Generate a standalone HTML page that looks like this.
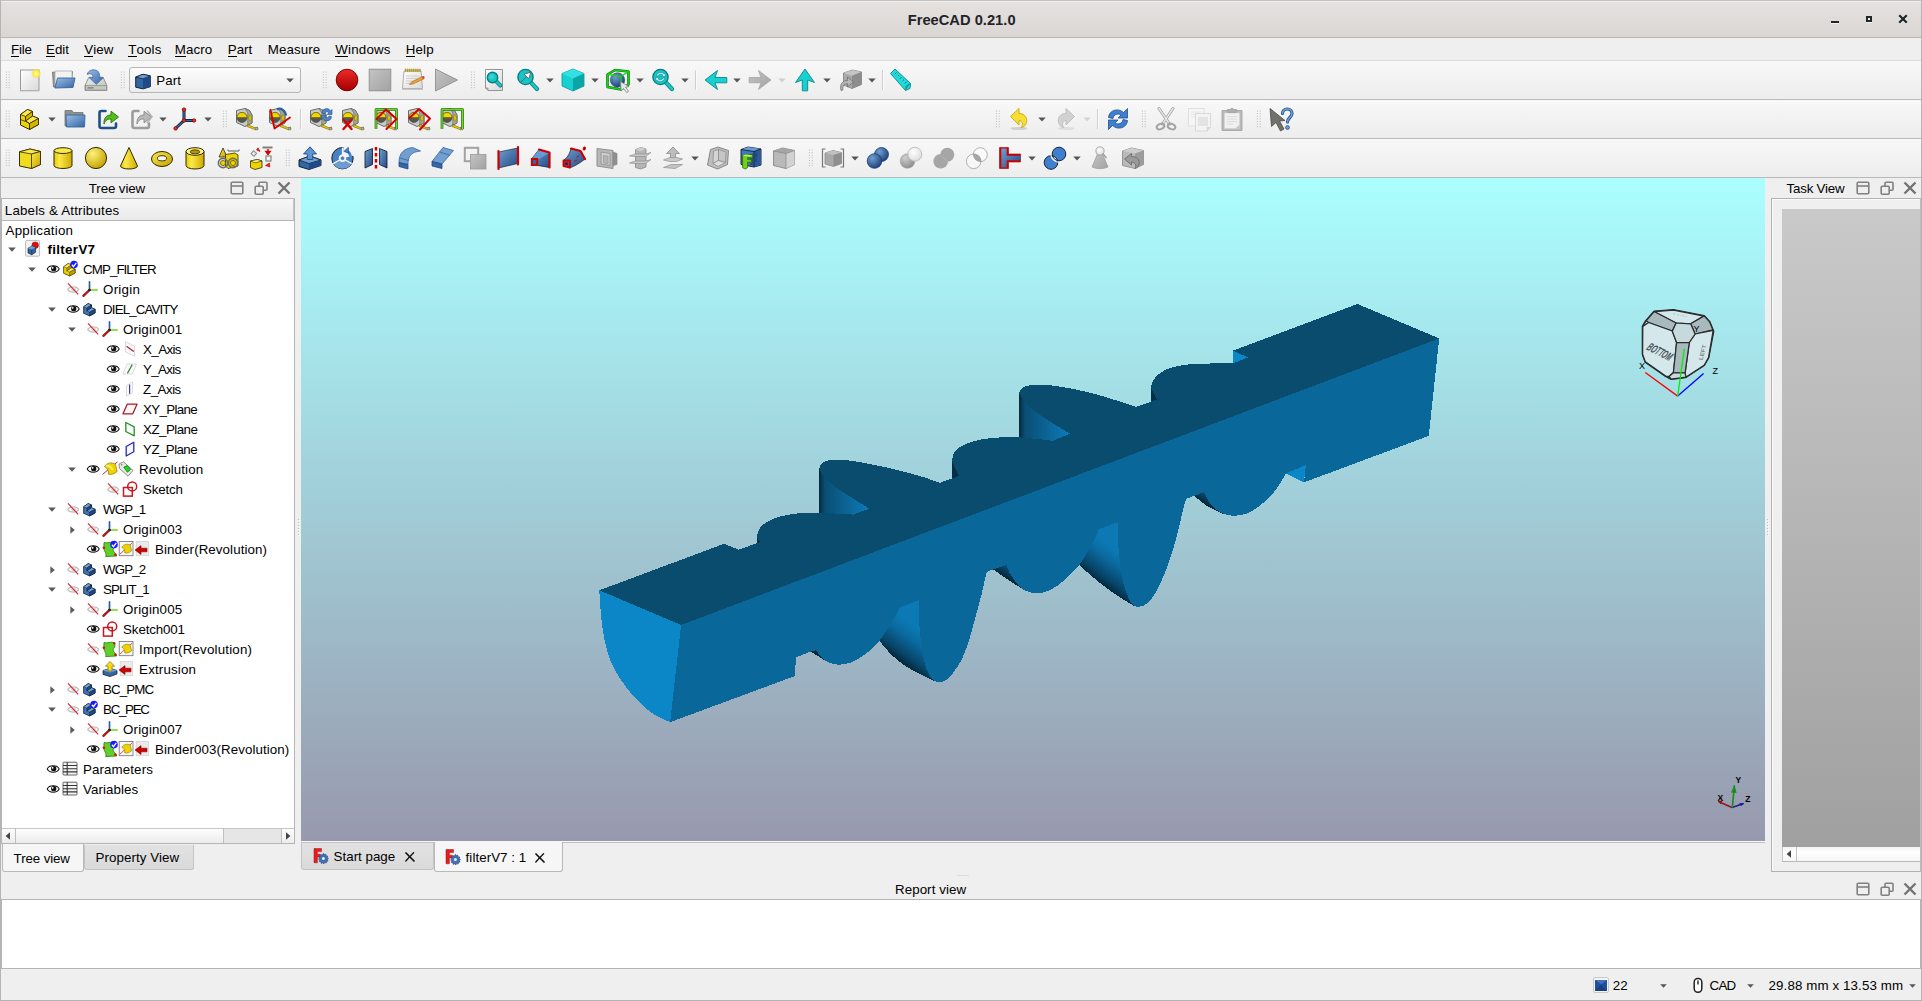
<!DOCTYPE html><html><head><meta charset="utf-8"><title>FreeCAD 0.21.0</title><style>
html,body{margin:0;padding:0;}
body{width:1922px;height:1001px;overflow:hidden;background:#efefef;font-family:"Liberation Sans",sans-serif;font-size:13.33px;color:#000;position:relative;}
div{box-sizing:border-box;}
svg{position:absolute;overflow:visible;}
.tb{position:absolute;left:1px;width:1920px;height:39px;background:linear-gradient(#f8f8f8,#ededed);border-bottom:1px solid #b9b9b9;}
u{text-decoration:none;border-bottom:1px solid #000;display:inline-block;line-height:13.8px;}
</style></head><body>
<svg width="0" height="0" style="left:0;top:0"><defs><linearGradient id="gY" x1="0" y1="0" x2="1" y2="1"><stop offset="0" stop-color="#fce94f"/><stop offset="1" stop-color="#c4a000"/></linearGradient><linearGradient id="gYv" x1="0" y1="0" x2="1" y2="0"><stop offset="0" stop-color="#e6c800"/><stop offset="0.3" stop-color="#fbe94a"/><stop offset="1" stop-color="#cfa900"/></linearGradient><linearGradient id="gB" x1="0" y1="0" x2="1" y2="1"><stop offset="0" stop-color="#729fcf"/><stop offset="1" stop-color="#204a87"/></linearGradient><linearGradient id="gBl" x1="0" y1="0" x2="1" y2="1"><stop offset="0" stop-color="#9dc0e6"/><stop offset="1" stop-color="#3465a4"/></linearGradient><linearGradient id="gT" x1="0" y1="0" x2="1" y2="1"><stop offset="0" stop-color="#34e0e2"/><stop offset="1" stop-color="#06989a"/></linearGradient><linearGradient id="gG" x1="0" y1="0" x2="1" y2="1"><stop offset="0" stop-color="#c4c4c4"/><stop offset="1" stop-color="#a2a2a2"/></linearGradient><linearGradient id="gGl" x1="0" y1="0" x2="1" y2="1"><stop offset="0" stop-color="#eeeeec"/><stop offset="1" stop-color="#babdb6"/></linearGradient><linearGradient id="gR" x1="0" y1="0" x2="0" y2="1"><stop offset="0" stop-color="#ef2929"/><stop offset="1" stop-color="#a40000"/></linearGradient><linearGradient id="gP" x1="0" y1="0" x2="1" y2="1"><stop offset="0" stop-color="#ffffff"/><stop offset="1" stop-color="#d9d9d9"/></linearGradient><linearGradient id="gSb" x1="0" y1="0" x2="0" y2="1"><stop offset="0" stop-color="#f9f9f9"/><stop offset="1" stop-color="#ffffff"/></linearGradient><radialGradient id="gSun" cx="0.5" cy="0.5" r="0.5"><stop offset="0" stop-color="#ffffc0"/><stop offset="0.5" stop-color="#fff04a"/><stop offset="1" stop-color="#f4e03a" stop-opacity="0.55"/></radialGradient><radialGradient id="gSphY" cx="0.35" cy="0.3" r="0.75"><stop offset="0" stop-color="#fdf27a"/><stop offset="1" stop-color="#c4a000"/></radialGradient><radialGradient id="gSphB" cx="0.35" cy="0.3" r="0.75"><stop offset="0" stop-color="#729fcf"/><stop offset="1" stop-color="#1b3f78"/></radialGradient><radialGradient id="gSphG" cx="0.35" cy="0.3" r="0.75"><stop offset="0" stop-color="#cfcfcf"/><stop offset="1" stop-color="#8a8a8a"/></radialGradient><radialGradient id="gSphW" cx="0.4" cy="0.35" r="0.75"><stop offset="0" stop-color="#ffffff"/><stop offset="1" stop-color="#d8d8d8"/></radialGradient></defs></svg>
<div style="position:absolute;left:0px;top:0px;width:1922px;height:1001px;border:1px solid #b4b4b4;border-top-color:#c2c2c2;pointer-events:none;z-index:50;"></div>
<div style="position:absolute;left:1px;top:1px;width:1920px;height:36px;background:linear-gradient(#e4e1de,#dad6d3);border-top:1px solid #f1efed;"></div>
<div style="position:absolute;left:1px;top:37px;width:1920px;height:1px;background:#bcb6af;"></div>
<div style="position:absolute;top:9.50px;line-height:20px;font-size:14.67px;letter-spacing:0.024px;color:#1f2428;white-space:pre;font-weight:bold;left:907.71px;">FreeCAD 0.21.0</div>
<svg style="left:1825px;top:10px" width="90" height="18" viewBox="1825 10 90 18"><rect x="1831" y="22" width="8" height="2" fill="#f4f2f0"/><rect x="1831" y="21" width="8" height="2" fill="#1e262b"/><rect x="1866" y="17" width="6" height="6" fill="#f4f2f0"/><rect x="1866" y="16" width="6" height="6" fill="#1e262b"/><rect x="1868" y="18" width="2" height="2" fill="#f4f2f0"/><path d="M1900 17 L1906 23 M1906 17 L1900 23" stroke="#f4f2f0" stroke-width="2.2" stroke-linecap="square"/><path d="M1900 16 L1906 22 M1906 16 L1900 22" stroke="#1e262b" stroke-width="2.2" stroke-linecap="square"/></svg>
<div style="position:absolute;left:1px;top:38px;width:1920px;height:22px;background:#efefef;"></div>
<div style="position:absolute;left:1px;top:60px;width:1920px;height:1px;background:#dcdcdc;"></div>
<div style="position:absolute;left:11.0px;top:39.6px;line-height:20px;letter-spacing:-0.195px;white-space:pre;"><u>F</u>ile</div>
<div style="position:absolute;left:46.0px;top:39.6px;line-height:20px;letter-spacing:0.008px;white-space:pre;"><u>E</u>dit</div>
<div style="position:absolute;left:84.3px;top:39.6px;line-height:20px;letter-spacing:0.087px;white-space:pre;"><u>V</u>iew</div>
<div style="position:absolute;left:128.3px;top:39.6px;line-height:20px;letter-spacing:0.116px;white-space:pre;"><u>T</u>ools</div>
<div style="position:absolute;left:174.7px;top:39.6px;line-height:20px;letter-spacing:0.113px;white-space:pre;"><u>M</u>acro</div>
<div style="position:absolute;left:227.7px;top:39.6px;line-height:20px;letter-spacing:0.038px;white-space:pre;"><u>P</u>art</div>
<div style="position:absolute;left:267.7px;top:39.6px;line-height:20px;letter-spacing:0.105px;white-space:pre;">Measure</div>
<div style="position:absolute;left:335.3px;top:39.6px;line-height:20px;letter-spacing:0.189px;white-space:pre;"><u>W</u>indows</div>
<div style="position:absolute;left:405.7px;top:39.6px;line-height:20px;letter-spacing:0.146px;white-space:pre;"><u>H</u>elp</div>
<div class="tb" style="top:61px"></div>
<div class="tb" style="top:100px"></div>
<div class="tb" style="top:139px"></div>
<svg style="left:5.0px;top:71.0px" width="6" height="18" viewBox="0 0 6 18"><rect x="0.9" y="0.6" width="1" height="1" fill="#b9b9b9"/><rect x="3.7" y="0.6" width="1" height="1" fill="#b9b9b9"/><rect x="0.9" y="3.2" width="1" height="1" fill="#b9b9b9"/><rect x="3.7" y="3.2" width="1" height="1" fill="#b9b9b9"/><rect x="0.9" y="5.8" width="1" height="1" fill="#b9b9b9"/><rect x="3.7" y="5.8" width="1" height="1" fill="#b9b9b9"/><rect x="0.9" y="8.4" width="1" height="1" fill="#b9b9b9"/><rect x="3.7" y="8.4" width="1" height="1" fill="#b9b9b9"/><rect x="0.9" y="11.0" width="1" height="1" fill="#b9b9b9"/><rect x="3.7" y="11.0" width="1" height="1" fill="#b9b9b9"/><rect x="0.9" y="13.6" width="1" height="1" fill="#b9b9b9"/><rect x="3.7" y="13.6" width="1" height="1" fill="#b9b9b9"/><rect x="0.9" y="16.2" width="1" height="1" fill="#b9b9b9"/><rect x="3.7" y="16.2" width="1" height="1" fill="#b9b9b9"/></svg>
<svg style="left:18.0px;top:68.0px" width="24" height="24" viewBox="0 0 24 24"><rect x="2.5" y="2" width="18.5" height="20.5" fill="url(#gP)" stroke="#9a9a9a" stroke-width="1"/><path d="M2 23 H21.5" stroke="#c8c8c8" stroke-width="1"/><circle cx="18.2" cy="5.6" r="4.6" fill="url(#gSun)"/></svg>
<svg style="left:51.0px;top:68.0px" width="24" height="24" viewBox="0 0 24 24"><path d="M1.5 4 L2.5 19 H20 L21.5 3.5 H10 L9 5 Z" fill="#9b9d98" stroke="#6e706b" stroke-width="0.8"/><path d="M4 3 H21 V16 H4 Z" fill="#f2f2f0" stroke="#a5a5a2" stroke-width="0.7"/><path d="M4 20 L6.5 10 H24 L22 19.5 Z" fill="url(#gBl)" stroke="#3465a4" stroke-width="0.9" stroke-linejoin="round"/></svg>
<svg style="left:84.0px;top:68.0px" width="24" height="24" viewBox="0 0 24 24"><path d="M1 17.5 L4.8 9.3 H19.1 L22.9 17.5 V22.4 H1 Z" fill="url(#gGl)" stroke="#888a85" stroke-width="0.9" stroke-linejoin="round"/><rect x="1.5" y="17.5" width="21" height="4.6" fill="#c4c6c0" stroke="#888a85" stroke-width="0.7"/><rect x="3.5" y="19.3" width="6" height="1.2" fill="#777"/><path d="M3.2 6.5 C4 2 10 0.5 13.5 3 C15.5 4.8 15.8 7 15.8 9.8 H19.3 L12.3 16.3 L5.3 9.8 H9 C9 7 8 4.5 3.2 6.5 Z" fill="url(#gBl)" stroke="#3465a4" stroke-width="0.7"/></svg>
<svg style="left:120.0px;top:71.0px" width="6" height="18" viewBox="0 0 6 18"><rect x="0.9" y="0.6" width="1" height="1" fill="#b9b9b9"/><rect x="3.7" y="0.6" width="1" height="1" fill="#b9b9b9"/><rect x="0.9" y="3.2" width="1" height="1" fill="#b9b9b9"/><rect x="3.7" y="3.2" width="1" height="1" fill="#b9b9b9"/><rect x="0.9" y="5.8" width="1" height="1" fill="#b9b9b9"/><rect x="3.7" y="5.8" width="1" height="1" fill="#b9b9b9"/><rect x="0.9" y="8.4" width="1" height="1" fill="#b9b9b9"/><rect x="3.7" y="8.4" width="1" height="1" fill="#b9b9b9"/><rect x="0.9" y="11.0" width="1" height="1" fill="#b9b9b9"/><rect x="3.7" y="11.0" width="1" height="1" fill="#b9b9b9"/><rect x="0.9" y="13.6" width="1" height="1" fill="#b9b9b9"/><rect x="3.7" y="13.6" width="1" height="1" fill="#b9b9b9"/><rect x="0.9" y="16.2" width="1" height="1" fill="#b9b9b9"/><rect x="3.7" y="16.2" width="1" height="1" fill="#b9b9b9"/></svg>
<div style="position:absolute;left:129px;top:67px;width:172px;height:26px;border:1px solid #b6b6b6;border-radius:3px;background:linear-gradient(#fdfdfd,#ededed);"></div>
<svg style="left:134px;top:72px" width="18" height="18" viewBox="0 0 16 16"><path d="M1.5 4.5 L8 2 L14.5 3.5 V13 L8 15 L1.5 13.5 Z" fill="#3465a4" stroke="#0b1521" stroke-width="0.8" stroke-linejoin="round"/><path d="M1.5 4.5 L8 2 L14.5 3.5 L8 6 Z" fill="#729fcf" stroke="#0b1521" stroke-width="0.6"/><path d="M8 6 L14.5 3.5 V13 L8 15 Z" fill="#204a87"/></svg>
<div style="position:absolute;top:70.50px;line-height:20px;font-size:13.33px;letter-spacing:0.102px;color:#000;white-space:pre;left:156.30px;">Part</div>
<svg style="left:285.5px;top:78.0px" width="8" height="5" viewBox="0 0 8 5"><path d="M0.3 0.5 H7.7 L4 4.6 Z" fill="#555"/></svg>
<svg style="left:322.0px;top:71.0px" width="6" height="18" viewBox="0 0 6 18"><rect x="0.9" y="0.6" width="1" height="1" fill="#b9b9b9"/><rect x="3.7" y="0.6" width="1" height="1" fill="#b9b9b9"/><rect x="0.9" y="3.2" width="1" height="1" fill="#b9b9b9"/><rect x="3.7" y="3.2" width="1" height="1" fill="#b9b9b9"/><rect x="0.9" y="5.8" width="1" height="1" fill="#b9b9b9"/><rect x="3.7" y="5.8" width="1" height="1" fill="#b9b9b9"/><rect x="0.9" y="8.4" width="1" height="1" fill="#b9b9b9"/><rect x="3.7" y="8.4" width="1" height="1" fill="#b9b9b9"/><rect x="0.9" y="11.0" width="1" height="1" fill="#b9b9b9"/><rect x="3.7" y="11.0" width="1" height="1" fill="#b9b9b9"/><rect x="0.9" y="13.6" width="1" height="1" fill="#b9b9b9"/><rect x="3.7" y="13.6" width="1" height="1" fill="#b9b9b9"/><rect x="0.9" y="16.2" width="1" height="1" fill="#b9b9b9"/><rect x="3.7" y="16.2" width="1" height="1" fill="#b9b9b9"/></svg>
<svg style="left:335.0px;top:68.0px" width="24" height="24" viewBox="0 0 24 24"><circle cx="12" cy="12" r="10.8" fill="url(#gR)" stroke="#6a0000" stroke-width="0.9"/></svg>
<svg style="left:368.0px;top:68.0px" width="24" height="24" viewBox="0 0 24 24"><rect x="1.2" y="1.2" width="21.6" height="21.6" fill="url(#gG)" stroke="#8c8c8c" stroke-width="0.9"/></svg>
<svg style="left:401.0px;top:68.0px" width="24" height="24" viewBox="0 0 24 24"><path d="M1.5 20.5 L3 3 H20 L21.5 20.5 Z" fill="url(#gP)" stroke="#9a9a9a" stroke-width="0.8"/><rect x="4.00" y="0.8" width="1.2" height="3" rx="0.6" fill="#c2ab1f" stroke="#8f7c10" stroke-width="0.3"/><rect x="6.05" y="0.8" width="1.2" height="3" rx="0.6" fill="#c2ab1f" stroke="#8f7c10" stroke-width="0.3"/><rect x="8.10" y="0.8" width="1.2" height="3" rx="0.6" fill="#c2ab1f" stroke="#8f7c10" stroke-width="0.3"/><rect x="10.15" y="0.8" width="1.2" height="3" rx="0.6" fill="#c2ab1f" stroke="#8f7c10" stroke-width="0.3"/><rect x="12.20" y="0.8" width="1.2" height="3" rx="0.6" fill="#c2ab1f" stroke="#8f7c10" stroke-width="0.3"/><rect x="14.25" y="0.8" width="1.2" height="3" rx="0.6" fill="#c2ab1f" stroke="#8f7c10" stroke-width="0.3"/><rect x="16.30" y="0.8" width="1.2" height="3" rx="0.6" fill="#c2ab1f" stroke="#8f7c10" stroke-width="0.3"/><rect x="18.35" y="0.8" width="1.2" height="3" rx="0.6" fill="#c2ab1f" stroke="#8f7c10" stroke-width="0.3"/><path d="M5 8 H18 M5 10.5 H16 M5 13 H17 M5 15.5 H12" stroke="#c6c6c6" stroke-width="0.8"/><path d="M1 21.2 H22" stroke="#bdbdbd" stroke-width="1.2"/><path d="M8.5 16.5 L10.5 14 L21 8.5 L23 10.8 L12 16 Z" fill="#e9a23b" stroke="#a86a14" stroke-width="0.6"/><circle cx="22.3" cy="9.4" r="1.3" fill="#e63b3b"/></svg>
<svg style="left:434.0px;top:68.0px" width="24" height="24" viewBox="0 0 24 24"><path d="M1.5 1 L23.5 12 L1.5 23 Z" fill="url(#gG)" stroke="#909090" stroke-width="0.9" stroke-linejoin="round"/></svg>
<svg style="left:470.0px;top:71.0px" width="6" height="18" viewBox="0 0 6 18"><rect x="0.9" y="0.6" width="1" height="1" fill="#b9b9b9"/><rect x="3.7" y="0.6" width="1" height="1" fill="#b9b9b9"/><rect x="0.9" y="3.2" width="1" height="1" fill="#b9b9b9"/><rect x="3.7" y="3.2" width="1" height="1" fill="#b9b9b9"/><rect x="0.9" y="5.8" width="1" height="1" fill="#b9b9b9"/><rect x="3.7" y="5.8" width="1" height="1" fill="#b9b9b9"/><rect x="0.9" y="8.4" width="1" height="1" fill="#b9b9b9"/><rect x="3.7" y="8.4" width="1" height="1" fill="#b9b9b9"/><rect x="0.9" y="11.0" width="1" height="1" fill="#b9b9b9"/><rect x="3.7" y="11.0" width="1" height="1" fill="#b9b9b9"/><rect x="0.9" y="13.6" width="1" height="1" fill="#b9b9b9"/><rect x="3.7" y="13.6" width="1" height="1" fill="#b9b9b9"/><rect x="0.9" y="16.2" width="1" height="1" fill="#b9b9b9"/><rect x="3.7" y="16.2" width="1" height="1" fill="#b9b9b9"/></svg>
<svg style="left:483.0px;top:68.0px" width="24" height="24" viewBox="0 0 24 24"><path d="M2.5 1.5 H19.5 V22.5 H5 L2.5 20 Z" fill="url(#gP)" stroke="#8a8a8a" stroke-width="0.9"/><path d="M2.5 20 H5 V22.5" fill="#bbb" stroke="#777" stroke-width="0.6"/><path d="M12.6 12.6 L17.2 17.4" stroke="#067e80" stroke-width="4.2" stroke-linecap="round"/><path d="M12.6 12.6 L17.2 17.4" stroke="#16c8ca" stroke-width="2.6" stroke-linecap="round"/><circle cx="9.5" cy="9.5" r="5.2" fill="#19c4c6" stroke="#067e80" stroke-width="1.4"/><circle cx="8.6" cy="8.6" r="2.6" fill="#3fdadc" opacity="0.7"/></svg>
<svg style="left:515.5px;top:68.0px" width="24" height="24" viewBox="0 0 24 24"><path d="M14.1 13.6 L21 21" stroke="#067e80" stroke-width="4.2" stroke-linecap="round"/><path d="M14.1 13.6 L21 21" stroke="#16c8ca" stroke-width="2.6" stroke-linecap="round"/><circle cx="9.5" cy="9" r="7.6" fill="#19c4c6" stroke="#067e80" stroke-width="1.4"/><path d="M5 14 L10.5 8.5 L8.2 6.2 L14.8 4.2 L12.8 10.8 L10.5 8.5" fill="#fff" stroke="#555" stroke-width="0.8" stroke-linejoin="round"/></svg>
<svg style="left:546.0px;top:78.0px" width="8" height="5" viewBox="0 0 8 5"><path d="M0.3 0.5 H7.7 L4 4.6 Z" fill="#555"/></svg>
<svg style="left:561.0px;top:68.0px" width="24" height="24" viewBox="0 0 24 24"><path d="M12 1 L23 5.5 V18 L12 23 L1 18 V5.5 Z" fill="#16d0d2" stroke="#06989a" stroke-width="0.8" stroke-linejoin="round"/><path d="M12 1 L23 5.5 L12 10.5 L1 5.5 Z" fill="#34e0e2"/><path d="M12 10.5 L23 5.5 V18 L12 23 Z" fill="#0aa5a7"/></svg>
<svg style="left:591.0px;top:78.0px" width="8" height="5" viewBox="0 0 8 5"><path d="M0.3 0.5 H7.7 L4 4.6 Z" fill="#555"/></svg>
<svg style="left:606.0px;top:68.0px" width="24" height="24" viewBox="0 0 24 24"><path d="M1.5 6.5 L9 2 L22.5 3.5 V16.5 L15 21.5 L1.5 19 Z" fill="none" stroke="#0a7a0a" stroke-width="2.6" stroke-linejoin="round"/><circle cx="11.5" cy="12" r="7.2" fill="url(#gSphB)" stroke="#1b3f78" stroke-width="0.6"/><path d="M1.5 6.5 L9 2 L22.5 3.5 V16.5 L15 21.5 L1.5 19 Z M1.5 6.5 L15 8.5 V21.5 M15 8.5 L22.5 3.5" fill="none" stroke="#18d218" stroke-width="1.3" stroke-linejoin="round"/><path d="M14.5 13.5 L15.2 22.8 L17.6 20.6 L20.8 24.6 L22.6 23.3 L19.6 19.2 L22.8 18.6 Z" fill="#e8e8e8" stroke="#777" stroke-width="0.7" stroke-linejoin="round"/></svg>
<svg style="left:636.0px;top:78.0px" width="8" height="5" viewBox="0 0 8 5"><path d="M0.3 0.5 H7.7 L4 4.6 Z" fill="#555"/></svg>
<svg style="left:650.5px;top:68.0px" width="24" height="24" viewBox="0 0 24 24"><path d="M14.1 13.6 L21 21" stroke="#067e80" stroke-width="4.2" stroke-linecap="round"/><path d="M14.1 13.6 L21 21" stroke="#16c8ca" stroke-width="2.6" stroke-linecap="round"/><circle cx="9.5" cy="9" r="7.6" fill="#19c4c6" stroke="#067e80" stroke-width="1.4"/><path d="M5.2 8 A4.6 4.6 0 0 1 13.2 6 L14.3 4.6 V8.6 H10.6 L12 7.2 A3 3 0 0 0 6.9 8 Z M13.8 10 A4.6 4.6 0 0 1 5.8 12 L4.7 13.4 V9.4 H8.4 L7 10.8 A3 3 0 0 0 12.1 10 Z" fill="#c8f4f5" stroke="#067e80" stroke-width="0.5"/></svg>
<svg style="left:681.0px;top:78.0px" width="8" height="5" viewBox="0 0 8 5"><path d="M0.3 0.5 H7.7 L4 4.6 Z" fill="#555"/></svg>
<div style="position:absolute;left:694.6px;top:70px;width:1px;height:20px;background:#cfcfcf"></div><div style="position:absolute;left:695.6px;top:70px;width:1px;height:20px;background:#fbfbfb"></div>
<svg style="left:703.5px;top:68.0px" width="24" height="24" viewBox="0 0 24 24"><path d="M1 12 L13.5 2.5 L11 9.5 H22.8 V14.8 H11 L13.5 21.5 Z" fill="#16d0d2" stroke="#06898b" stroke-width="0.9" stroke-linejoin="round"/></svg>
<svg style="left:733.0px;top:78.0px" width="8" height="5" viewBox="0 0 8 5"><path d="M0.3 0.5 H7.7 L4 4.6 Z" fill="#555"/></svg>
<svg style="left:748.0px;top:68.0px" width="24" height="24" viewBox="0 0 24 24"><path d="M23 12 L10.5 2.5 L13 9.5 H1.2 V14.8 H13 L10.5 21.5 Z" fill="url(#gG)" stroke="#a5a5a5" stroke-width="0.8" stroke-linejoin="round"/></svg>
<svg style="left:778.0px;top:78.0px" width="8" height="5" viewBox="0 0 8 5"><path d="M0.3 0.5 H7.7 L4 4.6 Z" fill="#d0d0d0"/></svg>
<svg style="left:793.0px;top:68.0px" width="24" height="24" viewBox="0 0 24 24"><path d="M12 1 L2.5 14.5 L9.3 12 V22.8 H14.7 V12 L21.5 14.5 Z" fill="#16d0d2" stroke="#06898b" stroke-width="0.9" stroke-linejoin="round"/></svg>
<svg style="left:823.0px;top:78.0px" width="8" height="5" viewBox="0 0 8 5"><path d="M0.3 0.5 H7.7 L4 4.6 Z" fill="#555"/></svg>
<svg style="left:838.5px;top:68.0px" width="24" height="24" viewBox="0 0 24 24"><path d="M13.5 2 L22.5 4 V16.5 L13 20.5 L4.5 17 V5 Z" fill="#a9a9a9" stroke="#7e7e7e" stroke-width="0.8" stroke-linejoin="round"/><path d="M13.5 2 L22.5 4 L13 7.8 L4.5 5 Z" fill="#c4c4c4"/><path d="M13 7.8 L22.5 4 V16.5 L13 20.5 Z" fill="#8d8d8d"/><path d="M2 22.5 C0.5 15.5 4 12.5 8.5 12.5 V9 L14.5 14 L8.5 19 V15.8 C5.5 15.5 3.5 17.5 3.8 22 Z" fill="#b5b5b5" stroke="#6f6f6f" stroke-width="0.8" stroke-linejoin="round"/></svg>
<svg style="left:868.0px;top:78.0px" width="8" height="5" viewBox="0 0 8 5"><path d="M0.3 0.5 H7.7 L4 4.6 Z" fill="#555"/></svg>
<div style="position:absolute;left:881.5px;top:70px;width:1px;height:20px;background:#cfcfcf"></div><div style="position:absolute;left:882.5px;top:70px;width:1px;height:20px;background:#fbfbfb"></div>
<svg style="left:889.0px;top:68.0px" width="24" height="24" viewBox="0 0 24 24"><path d="M1.5 5.5 L6 1 L21.5 15.5 L21 20.5 L16.5 22.5 Z" fill="#21dadc" stroke="#06898b" stroke-width="0.9" stroke-linejoin="round"/><path d="M16.5 22.5 L17 18 L21.5 15.5" fill="#0aa5a7" stroke="#06898b" stroke-width="0.6"/><path d="M7.5 4.5 L5.8 6.2 M10 6.8 L8.8 8 M12.5 9.1 L10.8 10.8 M15 11.5 L13.8 12.7 M17.5 13.8 L15.8 15.5" stroke="#046567" stroke-width="0.9"/></svg>
<svg style="left:5.0px;top:110.0px" width="6" height="18" viewBox="0 0 6 18"><rect x="0.9" y="0.6" width="1" height="1" fill="#b9b9b9"/><rect x="3.7" y="0.6" width="1" height="1" fill="#b9b9b9"/><rect x="0.9" y="3.2" width="1" height="1" fill="#b9b9b9"/><rect x="3.7" y="3.2" width="1" height="1" fill="#b9b9b9"/><rect x="0.9" y="5.8" width="1" height="1" fill="#b9b9b9"/><rect x="3.7" y="5.8" width="1" height="1" fill="#b9b9b9"/><rect x="0.9" y="8.4" width="1" height="1" fill="#b9b9b9"/><rect x="3.7" y="8.4" width="1" height="1" fill="#b9b9b9"/><rect x="0.9" y="11.0" width="1" height="1" fill="#b9b9b9"/><rect x="3.7" y="11.0" width="1" height="1" fill="#b9b9b9"/><rect x="0.9" y="13.6" width="1" height="1" fill="#b9b9b9"/><rect x="3.7" y="13.6" width="1" height="1" fill="#b9b9b9"/><rect x="0.9" y="16.2" width="1" height="1" fill="#b9b9b9"/><rect x="3.7" y="16.2" width="1" height="1" fill="#b9b9b9"/></svg>
<svg style="left:18.0px;top:105.5px" width="24" height="24" viewBox="0 0 24 24"><path d="M2.5 8.5 L9.5 3.5 L14.5 5.5 V10 L20.5 12.5 V18.5 L11.5 23.5 L2.5 19 Z" fill="#edd400" stroke="#302b00" stroke-width="1" stroke-linejoin="round"/><path d="M2.5 8.5 L9.5 3.5 L14.5 5.5 L7.5 10.5 Z M7.5 15 L14.5 10 L20.5 12.5 L11.5 17.5 Z" fill="#fce94f" stroke="#302b00" stroke-width="0.8" stroke-linejoin="round"/><path d="M11.5 17.5 L20.5 12.5 V18.5 L11.5 23.5 Z M7.5 10.5 L14.5 5.5 V10 L7.5 15 Z" fill="#d4b600" stroke="#302b00" stroke-width="0.8" stroke-linejoin="round"/><path d="M2.5 13.5 L7.5 15.5 M7.5 10.5 V15 L11.5 17.5 V23.5" fill="none" stroke="#302b00" stroke-width="0.8"/></svg>
<svg style="left:48.0px;top:117.0px" width="8" height="5" viewBox="0 0 8 5"><path d="M0.3 0.5 H7.7 L4 4.6 Z" fill="#555"/></svg>
<svg style="left:63.0px;top:105.5px" width="24" height="24" viewBox="0 0 24 24"><path d="M2 4.5 H9 L10.5 6.5 H20 V20 H2 Z" fill="#8f918c" stroke="#70726d" stroke-width="0.8"/><path d="M3 9 H22 L21.5 21 H3.5 Z" fill="url(#gBl)" stroke="#3465a4" stroke-width="0.9" stroke-linejoin="round"/></svg>
<svg style="left:95.5px;top:106.5px" width="24" height="24" viewBox="0 0 24 24"><path d="M9.5 4 H5.5 Q3.5 4 3.5 6 V19 Q3.5 21 5.5 21 H18 Q20 21 20 19 V16.5" fill="none" stroke="#1f4f8a" stroke-width="2.6" stroke-linecap="round"/><path d="M8 17 C7.5 10.5 11 8 15 8 V4.2 L22.5 10 L15 15.8 V12 C12 11.8 9.5 13 8 17 Z" fill="#4fbf1c" stroke="#2d6f08" stroke-width="0.9" stroke-linejoin="round"/></svg>
<svg style="left:129.0px;top:106.5px" width="24" height="24" viewBox="0 0 24 24"><path d="M9.5 4 H5.5 Q3.5 4 3.5 6 V19 Q3.5 21 5.5 21 H18 Q20 21 20 19 V16.5" fill="none" stroke="#9c9c9c" stroke-width="2.6" stroke-linecap="round"/><path d="M8 17 C7.5 10.5 11 8 15 8 V4.2 L22.5 10 L15 15.8 V12 C12 11.8 9.5 13 8 17 Z" fill="#b9b9b9" stroke="#8a8a8a" stroke-width="0.9" stroke-linejoin="round"/><path d="M18 3.5 L23 9.8 L18 16" fill="none" stroke="#b5b5b5" stroke-width="1.6"/></svg>
<svg style="left:159.0px;top:117.0px" width="8" height="5" viewBox="0 0 8 5"><path d="M0.3 0.5 H7.7 L4 4.6 Z" fill="#555"/></svg>
<svg style="left:172.2px;top:107.0px" width="24" height="24" viewBox="0 0 24 24"><path d="M12 13.5 V2.5 M12 13.5 L22 13.5 M12 13.5 L3.5 21.5" stroke="#0b1521" stroke-width="3" stroke-linecap="round"/><path d="M12 13.5 V2.5 M12 13.5 L22 13.5 M12 13.5 L3.5 21.5" stroke="#3465a4" stroke-width="1.6" stroke-linecap="round"/><circle cx="12" cy="2.6" r="1.8" fill="#ef2929" stroke="#6a0000" stroke-width="0.6"/><circle cx="22" cy="13.5" r="1.8" fill="#ef2929" stroke="#6a0000" stroke-width="0.6"/><circle cx="3.6" cy="21.4" r="1.8" fill="#ef2929" stroke="#6a0000" stroke-width="0.6"/><circle cx="12" cy="13.5" r="1.8" fill="#ef2929" stroke="#6a0000" stroke-width="0.6"/></svg>
<svg style="left:204.0px;top:117.0px" width="8" height="5" viewBox="0 0 8 5"><path d="M0.3 0.5 H7.7 L4 4.6 Z" fill="#555"/></svg>
<svg style="left:222.0px;top:110.0px" width="6" height="18" viewBox="0 0 6 18"><rect x="0.9" y="0.6" width="1" height="1" fill="#b9b9b9"/><rect x="3.7" y="0.6" width="1" height="1" fill="#b9b9b9"/><rect x="0.9" y="3.2" width="1" height="1" fill="#b9b9b9"/><rect x="3.7" y="3.2" width="1" height="1" fill="#b9b9b9"/><rect x="0.9" y="5.8" width="1" height="1" fill="#b9b9b9"/><rect x="3.7" y="5.8" width="1" height="1" fill="#b9b9b9"/><rect x="0.9" y="8.4" width="1" height="1" fill="#b9b9b9"/><rect x="3.7" y="8.4" width="1" height="1" fill="#b9b9b9"/><rect x="0.9" y="11.0" width="1" height="1" fill="#b9b9b9"/><rect x="3.7" y="11.0" width="1" height="1" fill="#b9b9b9"/><rect x="0.9" y="13.6" width="1" height="1" fill="#b9b9b9"/><rect x="3.7" y="13.6" width="1" height="1" fill="#b9b9b9"/><rect x="0.9" y="16.2" width="1" height="1" fill="#b9b9b9"/><rect x="3.7" y="16.2" width="1" height="1" fill="#b9b9b9"/></svg>
<svg style="left:235.0px;top:107.0px" width="24" height="24" viewBox="0 0 24 24"><path d="M1.5 3.5 L10 1.5 L14.5 3.5 L17 8 V16 L10 19.5 L1.5 15.5 Z" fill="#c9ccc6" stroke="#5f615d" stroke-width="0.9" stroke-linejoin="round"/><path d="M10 1.5 L14.5 3.5 L17 8 V16 L12.8 18 V6 Z" fill="#a4a7a1" stroke="#5f615d" stroke-width="0.6"/><circle cx="7" cy="10.5" r="5" fill="#55574f" stroke="#3a3b37" stroke-width="0.6"/><path d="M2 10.5 A5 5 0 0 1 12 10.5 Z" fill="#f1d600" stroke="#6e6000" stroke-width="0.6"/><ellipse cx="15" cy="11" rx="1.3" ry="3.2" fill="#e8cf00" stroke="#6e6000" stroke-width="0.5"/><path d="M12.5 17.5 L20 20.8 L22.5 20 L22.8 22.2 L20.5 22.8 L12 19.5 Z" fill="#e8cf00" stroke="#6e6000" stroke-width="0.6" stroke-linejoin="round"/><path d="M20.5 20.3 L23 21.3 L22.6 23 L20.3 22.6 Z" fill="#b8bab4" stroke="#5f615d" stroke-width="0.5"/></svg>
<svg style="left:268.0px;top:107.0px" width="24" height="24" viewBox="0 0 24 24"><path d="M1.5 3.5 L10 1.5 L14.5 3.5 L17 8 V16 L10 19.5 L1.5 15.5 Z" fill="#c9ccc6" stroke="#5f615d" stroke-width="0.9" stroke-linejoin="round"/><path d="M10 1.5 L14.5 3.5 L17 8 V16 L12.8 18 V6 Z" fill="#a4a7a1" stroke="#5f615d" stroke-width="0.6"/><circle cx="7" cy="10.5" r="5" fill="#55574f" stroke="#3a3b37" stroke-width="0.6"/><path d="M2 10.5 A5 5 0 0 1 12 10.5 Z" fill="#f1d600" stroke="#6e6000" stroke-width="0.6"/><ellipse cx="15" cy="11" rx="1.3" ry="3.2" fill="#e8cf00" stroke="#6e6000" stroke-width="0.5"/><path d="M12.5 17.5 L20 20.8 L22.5 20 L22.8 22.2 L20.5 22.8 L12 19.5 Z" fill="#e8cf00" stroke="#6e6000" stroke-width="0.6" stroke-linejoin="round"/><path d="M20.5 20.3 L23 21.3 L22.6 23 L20.3 22.6 Z" fill="#b8bab4" stroke="#5f615d" stroke-width="0.5"/><path d="M9 2.2 C13 0.5 17.5 3.5 18 8.5" fill="none" stroke="#2a5fa5" stroke-width="2.2"/><path d="M2.5 3 L6.5 21.5 L22 10.5" fill="none" stroke="#d40000" stroke-width="1.8" stroke-linejoin="round" stroke-linecap="round"/></svg>
<div style="position:absolute;left:299.5px;top:109px;width:1px;height:20px;background:#cfcfcf"></div><div style="position:absolute;left:300.5px;top:109px;width:1px;height:20px;background:#fbfbfb"></div>
<svg style="left:308.5px;top:107.0px" width="24" height="24" viewBox="0 0 24 24"><path d="M1.5 3.5 L10 1.5 L14.5 3.5 L17 8 V16 L10 19.5 L1.5 15.5 Z" fill="#c9ccc6" stroke="#5f615d" stroke-width="0.9" stroke-linejoin="round"/><path d="M10 1.5 L14.5 3.5 L17 8 V16 L12.8 18 V6 Z" fill="#a4a7a1" stroke="#5f615d" stroke-width="0.6"/><circle cx="7" cy="10.5" r="5" fill="#55574f" stroke="#3a3b37" stroke-width="0.6"/><path d="M2 10.5 A5 5 0 0 1 12 10.5 Z" fill="#f1d600" stroke="#6e6000" stroke-width="0.6"/><ellipse cx="15" cy="11" rx="1.3" ry="3.2" fill="#e8cf00" stroke="#6e6000" stroke-width="0.5"/><path d="M12.5 17.5 L20 20.8 L22.5 20 L22.8 22.2 L20.5 22.8 L12 19.5 Z" fill="#e8cf00" stroke="#6e6000" stroke-width="0.6" stroke-linejoin="round"/><path d="M20.5 20.3 L23 21.3 L22.6 23 L20.3 22.6 Z" fill="#b8bab4" stroke="#5f615d" stroke-width="0.5"/><path d="M13 6 A4.5 4.5 0 0 1 21.5 4 L23 2.5 V7.5 H18.2 L19.8 5.8 A2.4 2.4 0 0 0 15.5 6.8 Z M22.5 9.5 A4.5 4.5 0 0 1 14 11.5 L12.5 13 V8.2 H17.3 L15.7 9.8 A2.4 2.4 0 0 0 20 9 Z" fill="#4a86cf" stroke="#1f4f8a" stroke-width="0.6"/></svg>
<svg style="left:341.0px;top:107.0px" width="24" height="24" viewBox="0 0 24 24"><path d="M1.5 3.5 L10 1.5 L14.5 3.5 L17 8 V16 L10 19.5 L1.5 15.5 Z" fill="#c9ccc6" stroke="#5f615d" stroke-width="0.9" stroke-linejoin="round"/><path d="M10 1.5 L14.5 3.5 L17 8 V16 L12.8 18 V6 Z" fill="#a4a7a1" stroke="#5f615d" stroke-width="0.6"/><circle cx="7" cy="10.5" r="5" fill="#55574f" stroke="#3a3b37" stroke-width="0.6"/><path d="M2 10.5 A5 5 0 0 1 12 10.5 Z" fill="#f1d600" stroke="#6e6000" stroke-width="0.6"/><ellipse cx="15" cy="11" rx="1.3" ry="3.2" fill="#e8cf00" stroke="#6e6000" stroke-width="0.5"/><path d="M12.5 17.5 L20 20.8 L22.5 20 L22.8 22.2 L20.5 22.8 L12 19.5 Z" fill="#e8cf00" stroke="#6e6000" stroke-width="0.6" stroke-linejoin="round"/><path d="M20.5 20.3 L23 21.3 L22.6 23 L20.3 22.6 Z" fill="#b8bab4" stroke="#5f615d" stroke-width="0.5"/><path d="M2.5 13 L10.5 22 M10.5 13 L2.5 22" stroke="#d40000" stroke-width="2.4" stroke-linecap="round"/></svg>
<svg style="left:374.0px;top:107.0px" width="24" height="24" viewBox="0 0 24 24"><path d="M1.5 3.5 L10 1.5 L14.5 3.5 L17 8 V16 L10 19.5 L1.5 15.5 Z" fill="#c9ccc6" stroke="#5f615d" stroke-width="0.9" stroke-linejoin="round"/><path d="M10 1.5 L14.5 3.5 L17 8 V16 L12.8 18 V6 Z" fill="#a4a7a1" stroke="#5f615d" stroke-width="0.6"/><circle cx="7" cy="10.5" r="5" fill="#55574f" stroke="#3a3b37" stroke-width="0.6"/><path d="M2 10.5 A5 5 0 0 1 12 10.5 Z" fill="#f1d600" stroke="#6e6000" stroke-width="0.6"/><ellipse cx="15" cy="11" rx="1.3" ry="3.2" fill="#e8cf00" stroke="#6e6000" stroke-width="0.5"/><path d="M12.5 17.5 L20 20.8 L22.5 20 L22.8 22.2 L20.5 22.8 L12 19.5 Z" fill="#e8cf00" stroke="#6e6000" stroke-width="0.6" stroke-linejoin="round"/><path d="M20.5 20.3 L23 21.3 L22.6 23 L20.3 22.6 Z" fill="#b8bab4" stroke="#5f615d" stroke-width="0.5"/><path d="M2 22 V2.5 H22.5 V22" fill="none" stroke="#165a06" stroke-width="2.6" stroke-linejoin="round"/><path d="M2 22 V2.5 H22.5 V22" fill="none" stroke="#6fd626" stroke-width="1.5" stroke-linejoin="round"/><path d="M2.5 12 L12 2.5 L22.5 12 L12.5 22" fill="none" stroke="#d40000" stroke-width="2" stroke-linejoin="round" stroke-linecap="round"/></svg>
<svg style="left:407.0px;top:107.0px" width="24" height="24" viewBox="0 0 24 24"><path d="M1.5 3.5 L10 1.5 L14.5 3.5 L17 8 V16 L10 19.5 L1.5 15.5 Z" fill="#c9ccc6" stroke="#5f615d" stroke-width="0.9" stroke-linejoin="round"/><path d="M10 1.5 L14.5 3.5 L17 8 V16 L12.8 18 V6 Z" fill="#a4a7a1" stroke="#5f615d" stroke-width="0.6"/><circle cx="7" cy="10.5" r="5" fill="#55574f" stroke="#3a3b37" stroke-width="0.6"/><path d="M2 10.5 A5 5 0 0 1 12 10.5 Z" fill="#f1d600" stroke="#6e6000" stroke-width="0.6"/><ellipse cx="15" cy="11" rx="1.3" ry="3.2" fill="#e8cf00" stroke="#6e6000" stroke-width="0.5"/><path d="M12.5 17.5 L20 20.8 L22.5 20 L22.8 22.2 L20.5 22.8 L12 19.5 Z" fill="#e8cf00" stroke="#6e6000" stroke-width="0.6" stroke-linejoin="round"/><path d="M20.5 20.3 L23 21.3 L22.6 23 L20.3 22.6 Z" fill="#b8bab4" stroke="#5f615d" stroke-width="0.5"/><path d="M2.5 11 L12 2 L23 11.5 L13 22.5" fill="none" stroke="#d40000" stroke-width="2" stroke-linejoin="round" stroke-linecap="round"/></svg>
<svg style="left:440.0px;top:107.0px" width="24" height="24" viewBox="0 0 24 24"><path d="M1.5 3.5 L10 1.5 L14.5 3.5 L17 8 V16 L10 19.5 L1.5 15.5 Z" fill="#c9ccc6" stroke="#5f615d" stroke-width="0.9" stroke-linejoin="round"/><path d="M10 1.5 L14.5 3.5 L17 8 V16 L12.8 18 V6 Z" fill="#a4a7a1" stroke="#5f615d" stroke-width="0.6"/><circle cx="7" cy="10.5" r="5" fill="#55574f" stroke="#3a3b37" stroke-width="0.6"/><path d="M2 10.5 A5 5 0 0 1 12 10.5 Z" fill="#f1d600" stroke="#6e6000" stroke-width="0.6"/><ellipse cx="15" cy="11" rx="1.3" ry="3.2" fill="#e8cf00" stroke="#6e6000" stroke-width="0.5"/><path d="M12.5 17.5 L20 20.8 L22.5 20 L22.8 22.2 L20.5 22.8 L12 19.5 Z" fill="#e8cf00" stroke="#6e6000" stroke-width="0.6" stroke-linejoin="round"/><path d="M20.5 20.3 L23 21.3 L22.6 23 L20.3 22.6 Z" fill="#b8bab4" stroke="#5f615d" stroke-width="0.5"/><path d="M2 22 V2.5 H22.5 V22" fill="none" stroke="#165a06" stroke-width="2.6" stroke-linejoin="round"/><path d="M2 22 V2.5 H22.5 V22" fill="none" stroke="#6fd626" stroke-width="1.5" stroke-linejoin="round"/></svg>
<svg style="left:995.0px;top:110.0px" width="6" height="18" viewBox="0 0 6 18"><rect x="0.9" y="0.6" width="1" height="1" fill="#b9b9b9"/><rect x="3.7" y="0.6" width="1" height="1" fill="#b9b9b9"/><rect x="0.9" y="3.2" width="1" height="1" fill="#b9b9b9"/><rect x="3.7" y="3.2" width="1" height="1" fill="#b9b9b9"/><rect x="0.9" y="5.8" width="1" height="1" fill="#b9b9b9"/><rect x="3.7" y="5.8" width="1" height="1" fill="#b9b9b9"/><rect x="0.9" y="8.4" width="1" height="1" fill="#b9b9b9"/><rect x="3.7" y="8.4" width="1" height="1" fill="#b9b9b9"/><rect x="0.9" y="11.0" width="1" height="1" fill="#b9b9b9"/><rect x="3.7" y="11.0" width="1" height="1" fill="#b9b9b9"/><rect x="0.9" y="13.6" width="1" height="1" fill="#b9b9b9"/><rect x="3.7" y="13.6" width="1" height="1" fill="#b9b9b9"/><rect x="0.9" y="16.2" width="1" height="1" fill="#b9b9b9"/><rect x="3.7" y="16.2" width="1" height="1" fill="#b9b9b9"/></svg>
<svg style="left:1007.5px;top:107.0px" width="24" height="24" viewBox="0 0 24 24"><ellipse cx="11" cy="21.5" rx="8.5" ry="1.6" fill="#000" opacity="0.13"/><path d="M2.5 9.5 L11 1.5 V6.5 C17 6.5 19.5 11 18.5 15.5 C17.8 18.5 15 20.5 13 20.5 C15 18.5 15.5 14 11 13.5 V18 Z" fill="#f6de35" stroke="#c9a80a" stroke-width="0.9" stroke-linejoin="round"/></svg>
<svg style="left:1038.0px;top:117.0px" width="8" height="5" viewBox="0 0 8 5"><path d="M0.3 0.5 H7.7 L4 4.6 Z" fill="#555"/></svg>
<svg style="left:1053.0px;top:107.0px" width="24" height="24" viewBox="0 0 24 24"><ellipse cx="13" cy="21.5" rx="8.5" ry="1.6" fill="#000" opacity="0.07"/><path d="M21.5 9.5 L13 1.5 V6.5 C7 6.5 4.5 11 5.5 15.5 C6.2 18.5 9 20.5 11 20.5 C9 18.5 8.5 14 13 13.5 V18 Z" fill="#d2d2d2" stroke="#bdbdbd" stroke-width="0.9" stroke-linejoin="round"/></svg>
<svg style="left:1083.0px;top:117.0px" width="8" height="5" viewBox="0 0 8 5"><path d="M0.3 0.5 H7.7 L4 4.6 Z" fill="#d4d4d4"/></svg>
<div style="position:absolute;left:1096.5px;top:109px;width:1px;height:20px;background:#cfcfcf"></div><div style="position:absolute;left:1097.5px;top:109px;width:1px;height:20px;background:#fbfbfb"></div>
<svg style="left:1105.5px;top:107.0px" width="24" height="24" viewBox="0 0 24 24"><path d="M2.5 10.5 C3 4.5 9 1.5 14.5 3.5 L17.5 5.5 L21.5 1.5 V11 H12 L15 8 C11.5 6 7.5 7.5 7 11.5 Z" fill="#3f7fd0" stroke="#1f4f8a" stroke-width="0.8" stroke-linejoin="round"/><path d="M21.5 13.5 C21 19.5 15 22.5 9.5 20.5 L6.5 18.5 L2.5 22.5 V13 H12 L9 16 C12.5 18 16.5 16.5 17 12.5 Z" fill="#3f7fd0" stroke="#1f4f8a" stroke-width="0.8" stroke-linejoin="round"/></svg>
<svg style="left:1141.0px;top:110.0px" width="6" height="18" viewBox="0 0 6 18"><rect x="0.9" y="0.6" width="1" height="1" fill="#b9b9b9"/><rect x="3.7" y="0.6" width="1" height="1" fill="#b9b9b9"/><rect x="0.9" y="3.2" width="1" height="1" fill="#b9b9b9"/><rect x="3.7" y="3.2" width="1" height="1" fill="#b9b9b9"/><rect x="0.9" y="5.8" width="1" height="1" fill="#b9b9b9"/><rect x="3.7" y="5.8" width="1" height="1" fill="#b9b9b9"/><rect x="0.9" y="8.4" width="1" height="1" fill="#b9b9b9"/><rect x="3.7" y="8.4" width="1" height="1" fill="#b9b9b9"/><rect x="0.9" y="11.0" width="1" height="1" fill="#b9b9b9"/><rect x="3.7" y="11.0" width="1" height="1" fill="#b9b9b9"/><rect x="0.9" y="13.6" width="1" height="1" fill="#b9b9b9"/><rect x="3.7" y="13.6" width="1" height="1" fill="#b9b9b9"/><rect x="0.9" y="16.2" width="1" height="1" fill="#b9b9b9"/><rect x="3.7" y="16.2" width="1" height="1" fill="#b9b9b9"/></svg>
<svg style="left:1154.0px;top:107.0px" width="24" height="24" viewBox="0 0 24 24"><path d="M5 1.5 L15.5 17 M19 1.5 L8.5 17" stroke="#9d9d9d" stroke-width="3" stroke-linecap="round"/><path d="M5 1.5 L15.5 17 M19 1.5 L8.5 17" stroke="#e3e3e3" stroke-width="1.6" stroke-linecap="round"/><ellipse cx="6.5" cy="19.5" rx="4" ry="2.6" transform="rotate(-25 6.5 19.5)" fill="none" stroke="#a3a3a3" stroke-width="2"/><ellipse cx="17.5" cy="19.5" rx="4" ry="2.6" transform="rotate(25 17.5 19.5)" fill="none" stroke="#a3a3a3" stroke-width="2"/></svg>
<svg style="left:1187.0px;top:107.0px" width="24" height="24" viewBox="0 0 24 24"><path d="M1.5 1.5 H17 V19 H1.5 Z" fill="#f6f6f6" stroke="#d9d9d9" stroke-width="0.8"/><path d="M4 5 H14 M4 7.5 H14 M4 10 H10" stroke="#e2e2e2" stroke-width="0.8"/><path d="M8.5 6.5 H23.5 V20.5 L20 24 H8.5 Z" fill="#f3f3f3" stroke="#d2d2d2" stroke-width="0.8"/><path d="M11 10 H21 V19 H11 Z" fill="#e3e3e3"/><path d="M23.5 20.5 H20 V24" fill="#dadada" stroke="#cfcfcf" stroke-width="0.6"/></svg>
<svg style="left:1220.0px;top:107.0px" width="24" height="24" viewBox="0 0 24 24"><path d="M2 3.5 H22 V23.5 H2 Z" fill="#b9b9b9" stroke="#a7a7a7" stroke-width="0.9"/><path d="M4.5 6 H19.5 V21.5 H4.5 Z" fill="#f0f0f0" stroke="#d5d5d5" stroke-width="0.6"/><path d="M7.5 4.5 V2.5 H10 Q12 0 14 2.5 H16.5 V4.5 Q16.5 5.5 15.5 5.5 H8.5 Q7.5 5.5 7.5 4.5 Z" fill="#adadad" stroke="#979797" stroke-width="0.6"/><path d="M7 9.5 H17 M7 12 H17 M7 14.5 H17 M7 17 H13" stroke="#dddddd" stroke-width="1"/><path d="M19.5 17.5 L15.5 21.5 H19.5 Z" fill="#c4c4c4"/></svg>
<svg style="left:1256.0px;top:110.0px" width="6" height="18" viewBox="0 0 6 18"><rect x="0.9" y="0.6" width="1" height="1" fill="#b9b9b9"/><rect x="3.7" y="0.6" width="1" height="1" fill="#b9b9b9"/><rect x="0.9" y="3.2" width="1" height="1" fill="#b9b9b9"/><rect x="3.7" y="3.2" width="1" height="1" fill="#b9b9b9"/><rect x="0.9" y="5.8" width="1" height="1" fill="#b9b9b9"/><rect x="3.7" y="5.8" width="1" height="1" fill="#b9b9b9"/><rect x="0.9" y="8.4" width="1" height="1" fill="#b9b9b9"/><rect x="3.7" y="8.4" width="1" height="1" fill="#b9b9b9"/><rect x="0.9" y="11.0" width="1" height="1" fill="#b9b9b9"/><rect x="3.7" y="11.0" width="1" height="1" fill="#b9b9b9"/><rect x="0.9" y="13.6" width="1" height="1" fill="#b9b9b9"/><rect x="3.7" y="13.6" width="1" height="1" fill="#b9b9b9"/><rect x="0.9" y="16.2" width="1" height="1" fill="#b9b9b9"/><rect x="3.7" y="16.2" width="1" height="1" fill="#b9b9b9"/></svg>
<svg style="left:1269.0px;top:107.0px" width="24" height="24" viewBox="0 0 24 24"><path d="M1 1.5 L2.5 19.5 L7 15.5 L11.5 24 L15 22 L10.5 14 L16 13.5 Z" fill="#6f716c" stroke="#4a4b47" stroke-width="0.8" stroke-linejoin="round"/><path d="M13.5 6.5 C13.5 0.5 23 0.5 23 6.5 C23 10.5 18.5 10.5 18.5 15" fill="none" stroke="#1f4f8a" stroke-width="3.2" stroke-linecap="round"/><path d="M13.5 6.5 C13.5 0.5 23 0.5 23 6.5 C23 10.5 18.5 10.5 18.5 15" fill="none" stroke="#6fa0dc" stroke-width="1.6" stroke-linecap="round"/><circle cx="18.5" cy="20.5" r="1.9" fill="#6fa0dc" stroke="#1f4f8a" stroke-width="0.8"/></svg>
<svg style="left:5.0px;top:149.0px" width="6" height="18" viewBox="0 0 6 18"><rect x="0.9" y="0.6" width="1" height="1" fill="#b9b9b9"/><rect x="3.7" y="0.6" width="1" height="1" fill="#b9b9b9"/><rect x="0.9" y="3.2" width="1" height="1" fill="#b9b9b9"/><rect x="3.7" y="3.2" width="1" height="1" fill="#b9b9b9"/><rect x="0.9" y="5.8" width="1" height="1" fill="#b9b9b9"/><rect x="3.7" y="5.8" width="1" height="1" fill="#b9b9b9"/><rect x="0.9" y="8.4" width="1" height="1" fill="#b9b9b9"/><rect x="3.7" y="8.4" width="1" height="1" fill="#b9b9b9"/><rect x="0.9" y="11.0" width="1" height="1" fill="#b9b9b9"/><rect x="3.7" y="11.0" width="1" height="1" fill="#b9b9b9"/><rect x="0.9" y="13.6" width="1" height="1" fill="#b9b9b9"/><rect x="3.7" y="13.6" width="1" height="1" fill="#b9b9b9"/><rect x="0.9" y="16.2" width="1" height="1" fill="#b9b9b9"/><rect x="3.7" y="16.2" width="1" height="1" fill="#b9b9b9"/></svg>
<svg style="left:18.0px;top:146.0px" width="24" height="24" viewBox="0 0 24 24"><path d="M1.5 5.8 L12 3 L22.5 5.5 V18.5 L13.5 22.5 L1.5 20 Z" fill="#f0dc1e" stroke="#302b00" stroke-width="1" stroke-linejoin="round"/><path d="M1.5 5.8 L12 3 L22.5 5.5 L13.5 8 Z" fill="#fbe94a" stroke="#302b00" stroke-width="0.8" stroke-linejoin="round"/><path d="M13.5 8 L22.5 5.5 V18.5 L13.5 22.5 Z" fill="url(#gY)" stroke="#302b00" stroke-width="0.8" stroke-linejoin="round"/></svg>
<svg style="left:50.5px;top:146.0px" width="24" height="24" viewBox="0 0 24 24"><path d="M3 4.6 V19.5 A9 3 0 0 0 21 19.5 V4.6" fill="url(#gYv)" stroke="#302b00" stroke-width="1"/><ellipse cx="12" cy="4.6" rx="9" ry="2.9" fill="#fbe94a" stroke="#302b00" stroke-width="1"/></svg>
<svg style="left:84.0px;top:146.0px" width="24" height="24" viewBox="0 0 24 24"><circle cx="12" cy="12" r="10.6" fill="url(#gSphY)" stroke="#302b00" stroke-width="1"/></svg>
<svg style="left:117.0px;top:146.0px" width="24" height="24" viewBox="0 0 24 24"><path d="M12 1.5 L3.5 20 A8.5 3 0 0 0 20.5 20 Z" fill="url(#gYv)" stroke="#302b00" stroke-width="1" stroke-linejoin="round"/></svg>
<svg style="left:150.0px;top:146.0px" width="24" height="24" viewBox="0 0 24 24"><ellipse cx="12" cy="13" rx="10.5" ry="7.5" fill="url(#gY)" stroke="#302b00" stroke-width="1"/><ellipse cx="12" cy="12.3" rx="4.6" ry="2.6" fill="#f4f4f4" stroke="#302b00" stroke-width="0.9"/></svg>
<svg style="left:183.0px;top:146.0px" width="24" height="24" viewBox="0 0 24 24"><path d="M3 5.5 V19.5 A9 3.5 0 0 0 21 19.5 V5.5" fill="url(#gYv)" stroke="#302b00" stroke-width="1"/><ellipse cx="12" cy="5.5" rx="9" ry="3.8" fill="#fdf38c" stroke="#302b00" stroke-width="1"/><ellipse cx="12" cy="5.8" rx="4.8" ry="2" fill="#b89600" stroke="#302b00" stroke-width="0.8"/></svg>
<svg style="left:216.0px;top:146.0px" width="24" height="24" viewBox="0 0 24 24"><path d="M7 2 L3 11 H11 Z" fill="url(#gY)" stroke="#302b00" stroke-width="0.8" stroke-linejoin="round"/><path d="M9.5 8.5 L19 7 L22 9 V20 L12 22.5 L9.5 20 Z" fill="#edd400" stroke="#302b00" stroke-width="0.8" stroke-linejoin="round"/><path d="M12 5 H23 M12 5 V3.5 M23 5 V3.5" stroke="#8c8e89" stroke-width="1.6"/><circle cx="7" cy="17" r="4.6" fill="none" stroke="#6b6d68" stroke-width="1.7"/><circle cx="17" cy="17" r="4.6" fill="none" stroke="#6b6d68" stroke-width="1.7"/><circle cx="7" cy="17" r="2.6" fill="#edd400" stroke="#302b00" stroke-width="0.6"/><circle cx="17" cy="17" r="2.6" fill="#edd400" stroke="#302b00" stroke-width="0.6"/></svg>
<svg style="left:249.0px;top:146.0px" width="24" height="24" viewBox="0 0 24 24"><path d="M1.5 15 L8.5 13.5 L13 15 V21.5 L6 23.5 L1.5 21.5 Z" fill="#edd400" stroke="#302b00" stroke-width="0.8" stroke-linejoin="round"/><path d="M1.5 15 L8.5 13.5 L13 15 L6 16.8 Z" fill="#fdf38c" stroke="#302b00" stroke-width="0.6"/><rect x="2.8" y="5.5" width="4" height="4" transform="rotate(40 4.8 7.5)" fill="#e8e8e8" stroke="#8c8e89" stroke-width="1"/><path d="M13.5 1.5 H23.5" stroke="#7e807b" stroke-width="2"/><path d="M19 3 V7.5 M19 8.5 L16.8 5.5 H21.2 Z" stroke="#d40000" fill="#ef2929" stroke-width="1.4"/><rect x="17" y="10" width="5" height="5" fill="#f4f4f4" stroke="#8c8e89" stroke-width="1.3"/><path d="M7.5 4 L11 5.5 L9 1.8 Z M20.5 17 L16.5 19.5 L20.8 21 Z" fill="#ef2929" stroke="#a40000" stroke-width="0.6"/></svg>
<svg style="left:285.0px;top:149.0px" width="6" height="18" viewBox="0 0 6 18"><rect x="0.9" y="0.6" width="1" height="1" fill="#b9b9b9"/><rect x="3.7" y="0.6" width="1" height="1" fill="#b9b9b9"/><rect x="0.9" y="3.2" width="1" height="1" fill="#b9b9b9"/><rect x="3.7" y="3.2" width="1" height="1" fill="#b9b9b9"/><rect x="0.9" y="5.8" width="1" height="1" fill="#b9b9b9"/><rect x="3.7" y="5.8" width="1" height="1" fill="#b9b9b9"/><rect x="0.9" y="8.4" width="1" height="1" fill="#b9b9b9"/><rect x="3.7" y="8.4" width="1" height="1" fill="#b9b9b9"/><rect x="0.9" y="11.0" width="1" height="1" fill="#b9b9b9"/><rect x="3.7" y="11.0" width="1" height="1" fill="#b9b9b9"/><rect x="0.9" y="13.6" width="1" height="1" fill="#b9b9b9"/><rect x="3.7" y="13.6" width="1" height="1" fill="#b9b9b9"/><rect x="0.9" y="16.2" width="1" height="1" fill="#b9b9b9"/><rect x="3.7" y="16.2" width="1" height="1" fill="#b9b9b9"/></svg>
<svg style="left:297.5px;top:146.0px" width="24" height="24" viewBox="0 0 24 24"><path d="M1 14 L9 11 H15 L23 14 V19.5 L11 23.5 L1 20.5 Z" fill="#3465a4" stroke="#0b1521" stroke-width="0.9" stroke-linejoin="round"/><path d="M1 14 L9 11 H15 L23 14 L11 17.5 Z" fill="#729fcf" stroke="#0b1521" stroke-width="0.7" stroke-linejoin="round"/><path d="M11 17.5 L23 14 V19.5 L11 23.5 Z" fill="#204a87"/><path d="M12 0.8 L5.5 8 H9.3 V13.5 H14.7 V8 H18.5 Z" fill="#5f93d3" stroke="#1f4f8a" stroke-width="0.9" stroke-linejoin="round"/></svg>
<svg style="left:331.0px;top:146.0px" width="24" height="24" viewBox="0 0 24 24"><circle cx="11.5" cy="12.2" r="10.7" fill="#4a80c4" stroke="#0b1521" stroke-width="0.9"/><path d="M11.5 12.2 L2.3 17.6 A10.7 10.7 0 0 0 20.7 17.6 Z" fill="#6d9bd4"/><path d="M11.5 12.2 L12.6 0.6 A11.6 11.6 0 0 1 23 9.6 Z" fill="#f3f3f3"/><path d="M11.5 12.2 V1.4 M11.5 12.2 L2.3 17.6 M11.5 12.2 L20.7 17.6" stroke="#eef3fa" stroke-width="1.3"/><circle cx="11.5" cy="12.2" r="3.7" fill="#f3f3f3"/><circle cx="11.5" cy="12.2" r="1.5" fill="#4a80c4" stroke="#2a5a9a" stroke-width="0.5"/><path d="M19.6 10.6 A8.2 8.2 0 0 0 15.4 4.6" fill="none" stroke="#3f7fd0" stroke-width="2.6"/><path d="M12.8 5.4 L17.4 1.2 L17.8 7.2 Z" fill="#3f7fd0" stroke="#1b3f78" stroke-width="0.5" stroke-linejoin="round"/></svg>
<svg style="left:364.0px;top:146.0px" width="24" height="24" viewBox="0 0 24 24"><path d="M1 5.5 L8.5 2.5 V18.5 L1 22 Z" fill="url(#gB)" stroke="#0b1521" stroke-width="0.8" stroke-linejoin="round"/><path d="M23 5.5 L15.5 2.5 V18.5 L23 22 Z" fill="url(#gB)" stroke="#0b1521" stroke-width="0.8" stroke-linejoin="round"/><path d="M12 1 V23.5" stroke="#cc0000" stroke-width="2.5" stroke-dasharray="3.6 2.4"/></svg>
<svg style="left:397.0px;top:146.0px" width="24" height="24" viewBox="0 0 24 24"><path d="M2 16.5 C2 7 7 2.5 15.5 1.5 L23.5 5 C14 6 11 10 11 18.5 Z" fill="#729fcf" stroke="#3465a4" stroke-width="0.8" stroke-linejoin="round"/><path d="M2 16.5 L11 18.5 V23 L2 20.5 Z" fill="#3465a4" stroke="#204a87" stroke-width="0.8" stroke-linejoin="round"/><path d="M3 12 L11.5 14.5" stroke="#3465a4" stroke-width="0.8"/></svg>
<svg style="left:430.0px;top:146.0px" width="24" height="24" viewBox="0 0 24 24"><path d="M2 15.5 L13 1.5 L23.5 4.5 L12 18 Z" fill="#729fcf" stroke="#3465a4" stroke-width="0.8" stroke-linejoin="round"/><path d="M2 15.5 L12 18 V22.5 L2 20 Z" fill="#3465a4" stroke="#204a87" stroke-width="0.8" stroke-linejoin="round"/><path d="M9.5 6 L19.5 9" stroke="#3465a4" stroke-width="0.8"/></svg>
<svg style="left:463.0px;top:146.0px" width="24" height="24" viewBox="0 0 24 24"><rect x="1.8" y="1.8" width="13.4" height="13.4" fill="#f3f3f3" stroke="#a3a3a3" stroke-width="2"/><rect x="7.5" y="8.5" width="15.5" height="14.5" fill="url(#gG)" stroke="#9a9a9a" stroke-width="0.8"/></svg>
<svg style="left:496.0px;top:146.0px" width="24" height="24" viewBox="0 0 24 24"><path d="M2.5 6 L22 2 V17.5 L2.5 22 Z" fill="url(#gB)" stroke="#0b1521" stroke-width="0.6"/><path d="M2.5 5 V23 M22 1 V18.5" stroke="#cc0000" stroke-width="2.2" stroke-linecap="round"/></svg>
<svg style="left:529.0px;top:146.0px" width="24" height="24" viewBox="0 0 24 24"><path d="M2.5 13 L10 3.5 L20.5 6.5 V21.5 L9 19.5 Z" fill="url(#gB)" stroke="#0b1521" stroke-width="0.7" stroke-linejoin="round"/><path d="M10 3.5 L20.5 6.5 L9 13.8 L2.5 13 Z" fill="#6a9ad6"/><path d="M10 3.5 L20.5 6.5 V21.5" fill="none" stroke="#cc0000" stroke-width="2.2" stroke-linejoin="round" stroke-linecap="round"/><rect x="2.8" y="13" width="5.4" height="6" fill="#3465a4" stroke="#cc0000" stroke-width="1.9"/></svg>
<svg style="left:562.0px;top:146.0px" width="24" height="24" viewBox="0 0 24 24"><path d="M1.5 14.5 C6 11 8 7 9 2.5 L18.5 5 L23 13 C18 17 13 20 7.5 22 Z" fill="url(#gB)" stroke="#0b1521" stroke-width="0.7" stroke-linejoin="round"/><path d="M9 2.5 L18.5 5 L23 13" fill="none" stroke="#cc0000" stroke-width="2.2" stroke-linejoin="round" stroke-linecap="round"/><path d="M1.5 14.5 H8 V21.5 L1.5 20 Z" fill="#3465a4" stroke="#cc0000" stroke-width="1.9" stroke-linejoin="round"/><rect x="3.2" y="16.8" width="2.6" height="2" fill="#7a0000" stroke="#a40000" stroke-width="0.6"/><ellipse cx="22.3" cy="2.5" rx="1.1" ry="1.6" transform="rotate(25 22.3 2.5)" fill="#7a0000" stroke="#cc0000" stroke-width="0.9"/><path d="M12 15.5 L15 14 M14.5 11 L17 9.8" stroke="#cc0000" stroke-width="0.9"/></svg>
<svg style="left:595.0px;top:146.0px" width="24" height="24" viewBox="0 0 24 24"><path d="M2 2.5 L18 4.5 V22.5 L2 20 Z" fill="#b9b9b9" stroke="#878787" stroke-width="0.9" stroke-linejoin="round"/><path d="M18 6 L22 7.5 V18.5 L18 19.5 Z" fill="#909090" stroke="#888" stroke-width="0.7"/><path d="M6 6 L15 7.5 V19.5 L6 18 Z" fill="#cfcfcf" stroke="#8e8e8e" stroke-width="0.8"/><path d="M8.5 9.5 L13 10.2 V17.5 L8.5 16.8 Z" fill="#b4b4b4" stroke="#8e8e8e" stroke-width="0.6"/></svg>
<svg style="left:628.0px;top:146.0px" width="24" height="24" viewBox="0 0 24 24"><path d="M7.5 3.5 L13 1.5 L18 3 V21 L12.5 23 L7.5 21.5 Z" fill="#b5b5b5" stroke="#878787" stroke-width="0.8" stroke-linejoin="round"/><path d="M7.5 3.5 L13 1.5 L18 3 L12.5 5 Z" fill="#d0d0d0"/><path d="M1.5 10 L7.5 8 H18 L23 6.5 L17.5 10.5 H7 Z M1.5 17 L7.5 15 H18 L23 13.5 L17.5 17.5 H7 Z" fill="#c9c9c9" stroke="#8e8e8e" stroke-width="0.7" stroke-linejoin="round"/></svg>
<svg style="left:660.5px;top:146.0px" width="24" height="24" viewBox="0 0 24 24"><path d="M12 1 L5.5 7.5 H9.5 V12.5 H14.5 V7.5 H18.5 Z" fill="#bdbdbd" stroke="#8c8c8c" stroke-width="0.8" stroke-linejoin="round"/><path d="M2.5 14 L9 11.5 H15.5 L21.5 13 L15.5 15.5 H8.5 Z" fill="#c9c9c9" stroke="#909090" stroke-width="0.7" stroke-linejoin="round"/><path d="M2.5 21.5 L10 18.5 H21.5 L14 22.5 Z" fill="#c4c4c4" stroke="#909090" stroke-width="0.7" stroke-linejoin="round"/></svg>
<svg style="left:691.0px;top:156.0px" width="8" height="5" viewBox="0 0 8 5"><path d="M0.3 0.5 H7.7 L4 4.6 Z" fill="#555"/></svg>
<svg style="left:706.0px;top:146.0px" width="24" height="24" viewBox="0 0 24 24"><path d="M4.5 3.5 L12 1 L22.5 4.5 L21.5 18.5 L11.5 23 L1.5 19 Z" fill="#bdbdbd" stroke="#808080" stroke-width="0.9" stroke-linejoin="round"/><path d="M7.5 5 L12.5 3.5 V14.5 L7 17.5 Z" fill="#d4d4d4" stroke="#878787" stroke-width="0.7"/><path d="M12.5 3.5 L20 6 L19.5 16.5 L12.5 14.5 Z" fill="#c6c6c6" stroke="#878787" stroke-width="0.7"/><path d="M7 17.5 L12.5 14.5 L19.5 16.5 L12 20.5 Z" fill="#dcdcdc" stroke="#878787" stroke-width="0.7"/></svg>
<svg style="left:739.0px;top:146.0px" width="24" height="24" viewBox="0 0 24 24"><path d="M2 3.5 L9 1 L22 3 V19 L15 21 L2 18.5 Z" fill="#3f78bd" stroke="#0b1521" stroke-width="0.9" stroke-linejoin="round"/><path d="M2 3.5 L9 1 L22 3 L15 5.5 Z" fill="#6a9ad6"/><path d="M15 5.5 L22 3 V19 L15 21 Z" fill="#2a5a9a"/><path d="M2 3.5 L15 5.5 V21 M15 5.5 L22 3" fill="none" stroke="#0b1521" stroke-width="0.8"/><path d="M11 8 L18.5 6.6 V10.6 L15.5 11.2 V12.6 L18 12.2 V15.4 L15.5 15.9 V19.4 L11 19 Z" fill="#24466e" opacity="0.75"/><path d="M3.6 9.8 L6.2 8.4 L13.6 9.2 V12 L8.6 11.5 V13.4 L12.4 13.8 V16.4 L8.6 16 V21.6 L6.4 23 L3.6 21.8 Z" fill="#73d216" stroke="#2d6f08" stroke-width="0.8" stroke-linejoin="round"/><path d="M3.6 9.8 L6.2 8.4 L13.6 9.2 L10.8 10.4 Z" fill="#b7f36a"/></svg>
<svg style="left:772.0px;top:146.0px" width="24" height="24" viewBox="0 0 24 24"><path d="M1.5 5 L10.5 2 L22.5 4.5 V18.5 L14 22.5 L1.5 19.5 Z" fill="#b9b9b9" stroke="#878787" stroke-width="0.9" stroke-linejoin="round"/><path d="M1.5 5 L10.5 2 L22.5 4.5 L14 7.5 Z" fill="#a7a7a7"/><path d="M14 7.5 L22.5 4.5 V18.5 L14 22.5 Z" fill="#d2d2d2"/><path d="M1.5 5 L14 7.5 V22.5 M14 7.5 L22.5 4.5" fill="none" stroke="#878787" stroke-width="0.7"/></svg>
<svg style="left:808.0px;top:149.0px" width="6" height="18" viewBox="0 0 6 18"><rect x="0.9" y="0.6" width="1" height="1" fill="#b9b9b9"/><rect x="3.7" y="0.6" width="1" height="1" fill="#b9b9b9"/><rect x="0.9" y="3.2" width="1" height="1" fill="#b9b9b9"/><rect x="3.7" y="3.2" width="1" height="1" fill="#b9b9b9"/><rect x="0.9" y="5.8" width="1" height="1" fill="#b9b9b9"/><rect x="3.7" y="5.8" width="1" height="1" fill="#b9b9b9"/><rect x="0.9" y="8.4" width="1" height="1" fill="#b9b9b9"/><rect x="3.7" y="8.4" width="1" height="1" fill="#b9b9b9"/><rect x="0.9" y="11.0" width="1" height="1" fill="#b9b9b9"/><rect x="3.7" y="11.0" width="1" height="1" fill="#b9b9b9"/><rect x="0.9" y="13.6" width="1" height="1" fill="#b9b9b9"/><rect x="3.7" y="13.6" width="1" height="1" fill="#b9b9b9"/><rect x="0.9" y="16.2" width="1" height="1" fill="#b9b9b9"/><rect x="3.7" y="16.2" width="1" height="1" fill="#b9b9b9"/></svg>
<svg style="left:821.0px;top:146.0px" width="24" height="24" viewBox="0 0 24 24"><path d="M4.5 3 H1.5 V21 H4.5 M19.5 3 H22.5 V21 H19.5" fill="none" stroke="#777" stroke-width="1.2"/><path d="M4 7 L12 4.5 L20.5 6.5 V17.5 L12.5 20.5 L4 18 Z" fill="#a9a9a9" stroke="#8a8a8a" stroke-width="0.8" stroke-linejoin="round"/><path d="M4 7 L12 4.5 L20.5 6.5 L12.5 9 Z" fill="#c0c0c0"/><path d="M12.5 9 L20.5 6.5 V17.5 L12.5 20.5 Z" fill="#8f8f8f"/></svg>
<svg style="left:851.0px;top:156.0px" width="8" height="5" viewBox="0 0 8 5"><path d="M0.3 0.5 H7.7 L4 4.6 Z" fill="#555"/></svg>
<svg style="left:865.5px;top:146.0px" width="24" height="24" viewBox="0 0 24 24"><circle cx="15.5" cy="8.5" r="7" fill="url(#gSphB)" stroke="#1b3f78" stroke-width="0.8"/><circle cx="8.5" cy="15" r="7.3" fill="url(#gSphB)" stroke="#1b3f78" stroke-width="0.8"/></svg>
<svg style="left:898.5px;top:146.0px" width="24" height="24" viewBox="0 0 24 24"><circle cx="8.5" cy="15" r="7.3" fill="url(#gSphG)" stroke="#a0a0a0" stroke-width="0.6"/><circle cx="15.8" cy="8.2" r="7" fill="url(#gSphW)" stroke="#b5b5b5" stroke-width="0.8"/></svg>
<svg style="left:932.0px;top:146.0px" width="24" height="24" viewBox="0 0 24 24"><circle cx="15.3" cy="8.7" r="7" fill="#a6a6a6"/><circle cx="8.7" cy="15.3" r="7.3" fill="#a6a6a6"/><path d="M7 8 L16.5 17" stroke="#b8b8b8" stroke-width="0.8"/></svg>
<svg style="left:965.0px;top:146.0px" width="24" height="24" viewBox="0 0 24 24"><circle cx="15.3" cy="8.7" r="7" fill="#fafafa" stroke="#a9a9a9" stroke-width="0.9"/><circle cx="8.7" cy="15.3" r="7.3" fill="#fafafa" fill-opacity="0.6" stroke="#a9a9a9" stroke-width="0.9"/><path d="M8.5 8 A7 7 0 0 0 16 15.5 A7.3 7.3 0 0 0 8.5 8 Z" fill="#a6a6a6" stroke="#9a9a9a" stroke-width="0.6"/></svg>
<svg style="left:998.0px;top:146.0px" width="24" height="24" viewBox="0 0 24 24"><path d="M1.5 1.5 H10.5 V8 H22.5 V16 H10.5 V22.5 H1.5 Z" fill="#cc0000" stroke="#a40000" stroke-width="0.6"/><path d="M3.3 2.5 H8.7 V9.8 H22.5 V14.2 H8.7 V21.5 H3.3 Z" fill="url(#gB)"/></svg>
<svg style="left:1028.0px;top:156.0px" width="8" height="5" viewBox="0 0 8 5"><path d="M0.3 0.5 H7.7 L4 4.6 Z" fill="#555"/></svg>
<svg style="left:1043.0px;top:146.0px" width="24" height="24" viewBox="0 0 24 24"><circle cx="16" cy="8" r="6.8" fill="#3f7fd0" stroke="#0b1521" stroke-width="0.9"/><circle cx="8" cy="16.5" r="6.8" fill="#3f7fd0" stroke="#0b1521" stroke-width="0.9"/><path d="M9.5 9.8 A6.8 6.8 0 0 0 14.6 14.6 A6.8 6.8 0 0 0 9.5 9.8 Z" fill="#f1f1f1" stroke="#0b1521" stroke-width="0.8"/><path d="M7.8 8.5 A8.5 8.5 0 0 0 15.8 16.3 M9.3 11.5 A6 6 0 0 0 13 15.3" fill="none" stroke="#f1f1f1" stroke-width="1.1"/></svg>
<svg style="left:1073.0px;top:156.0px" width="8" height="5" viewBox="0 0 8 5"><path d="M0.3 0.5 H7.7 L4 4.6 Z" fill="#555"/></svg>
<svg style="left:1088.0px;top:146.0px" width="24" height="24" viewBox="0 0 24 24"><path d="M9.5 8 L4 21 Q12 24.5 20 21 L14.5 8 Z" fill="url(#gG)" stroke="#999" stroke-width="0.7" stroke-linejoin="round"/><circle cx="12" cy="5" r="4.1" fill="url(#gSphW)" stroke="#a5a5a5" stroke-width="0.9"/><path d="M15 8 L18 11.5" stroke="#a5a5a5" stroke-width="1.8" stroke-linecap="round"/></svg>
<svg style="left:1121.0px;top:146.0px" width="24" height="24" viewBox="0 0 24 24"><path d="M1.5 5 L10.5 2 L22.5 4.5 V18.5 L14 22.5 L1.5 19.5 Z" fill="#b9b9b9" stroke="#8f8f8f" stroke-width="0.9" stroke-linejoin="round"/><path d="M1.5 5 L10.5 2 L22.5 4.5 L14 7.5 Z" fill="#cdcdcd"/><path d="M14 7.5 L22.5 4.5 V18.5 L14 22.5 Z" fill="#9c9c9c"/><path d="M3.5 13 L10.5 7.5 V10.5 C16 10.5 19 13.5 18 18 C17.5 20 16 22 14 22.5 C15.5 20.5 15.5 16.5 10.5 16 V19 Z" fill="#9a9a9a" stroke="#6c6c6c" stroke-width="0.9" stroke-linejoin="round"/></svg>
<div style="position:absolute;top:179.00px;line-height:20px;font-size:13.33px;letter-spacing:-0.111px;color:#000;white-space:pre;left:88.80px;">Tree view</div>
<svg style="left:229px;top:180px" width="64" height="16" viewBox="0 0 64 16"><rect x="2.2" y="2.2" width="11.6" height="11.6" rx="1" fill="none" stroke="#808080" stroke-width="1.6"/><path d="M2.2 6 H13.8" stroke="#808080" stroke-width="1.6"/><rect x="26.2" y="6.2" width="8" height="8" rx="1" fill="none" stroke="#808080" stroke-width="1.6"/><path d="M30 6 V3.2 Q30 2.2 31 2.2 H37 Q38 2.2 38 3.2 V9.2 Q38 10.2 37 10.2 H34.4" fill="none" stroke="#808080" stroke-width="1.6"/><path d="M49.5 2.5 L60.5 13.5 M60.5 2.5 L49.5 13.5" stroke="#737373" stroke-width="2.4"/></svg>
<div style="position:absolute;left:1px;top:198px;width:294px;height:646px;border:1px solid #b5b5b5;background:#fff;"></div>
<div style="position:absolute;left:2px;top:199px;width:292px;height:22px;background:linear-gradient(#f7f7f7,#eaeaea);border-bottom:1px solid #b5b5b5;border-right:1px solid #c4c4c4;"></div>
<div style="position:absolute;top:201.00px;line-height:20px;font-size:13.33px;letter-spacing:0.179px;color:#000;white-space:pre;left:4.80px;">Labels &amp; Attributes</div>
<div style="position:absolute;top:221.00px;line-height:20px;font-size:13.33px;letter-spacing:0.217px;color:#000;white-space:pre;left:5.60px;">Application</div>
<svg style="left:8.0px;top:247.0px" width="8" height="5" viewBox="0 0 8 5"><path d="M0.2 0.4 H7.8 L4 4.8 Z" fill="#5a5a5a"/></svg>
<svg style="left:25.0px;top:240.8px" width="16" height="16" viewBox="0 0 16 16"><rect x="0.6" y="-0.6" width="14" height="15.8" rx="1.2" fill="#f2f2f2" stroke="#a9a9a9" stroke-width="0.8"/><circle cx="10.2" cy="4.2" r="3.3" fill="#e01010" stroke="#8a0000" stroke-width="0.5"/><path d="M3 7.2 L7 5 L10.6 6.4 V11.2 L6.8 13.8 L3 12 Z" fill="#3465a4" stroke="#0b1521" stroke-width="0.6" stroke-linejoin="round"/><path d="M3 7.2 L7 5 L10.6 6.4 L6.8 8.6 Z" fill="#729fcf"/><path d="M6.8 8.6 V13.8" stroke="#0b1521" stroke-width="0.5"/></svg>
<div style="position:absolute;top:240.00px;line-height:20px;font-size:13.33px;letter-spacing:0.335px;color:#000;white-space:pre;font-weight:bold;left:47.50px;">filterV7</div>
<svg style="left:28.0px;top:267.0px" width="8" height="5" viewBox="0 0 8 5"><path d="M0.2 0.4 H7.8 L4 4.8 Z" fill="#5a5a5a"/></svg>
<svg style="left:45.0px;top:261.3px" width="16" height="16" viewBox="0 0 16 16"><g transform="translate(8.2,8) scale(0.88) translate(-8,-8)"><path d="M1.2 8 C3.5 3.2 12.5 3.2 14.8 8 C12.5 12.8 3.5 12.8 1.2 8 Z" fill="#fff" stroke="#111" stroke-width="1.15"/><circle cx="8.6" cy="7.6" r="3" fill="#111"/><circle cx="7.4" cy="6.6" r="1" fill="#fff"/></g></svg>
<svg style="left:61.5px;top:260.8px" width="16" height="16" viewBox="0 0 16 16"><g transform="translate(7.6,8.6) scale(0.92) translate(-8,-8.6)"><path d="M1.5 5.5 L6.5 2 L10 3.5 V6.5 L14 8.2 V12.3 L8 15.5 L1.5 12.6 Z" fill="#edd400" stroke="#302b00" stroke-width="0.8" stroke-linejoin="round"/><path d="M1.5 5.5 L6.5 2 L10 3.5 L5 7 Z M5 10 L10 6.5 L14 8.2 L8 11.4 Z" fill="#fce94f" stroke="#302b00" stroke-width="0.5" stroke-linejoin="round"/><path d="M8 11.4 L14 8.2 V12.3 L8 15.5 Z M5 7 L10 3.5 V6.5 L5 10 Z" fill="#c4a000" stroke="#302b00" stroke-width="0.5" stroke-linejoin="round"/></g><circle cx="12" cy="3.6" r="3.8" fill="#1a1aff"/><path d="M9.9 3.8 L11.5 5.6 L14.3 1.8" fill="none" stroke="#fff" stroke-width="1.3"/></svg>
<div style="position:absolute;top:260.00px;line-height:20px;font-size:13.33px;letter-spacing:-0.937px;color:#000;white-space:pre;left:83.10px;">CMP_FILTER</div>
<svg style="left:65.0px;top:281.3px" width="16" height="16" viewBox="0 0 16 16"><g transform="translate(8.2,8) scale(0.9) translate(-8,-8)"><path d="M1.8 8.6 C4 4.6 12 4.6 14.2 8.6 C12 12.4 4 12.4 1.8 8.6 Z" fill="#fafafa" stroke="#bdbdbd" stroke-width="1.2"/><circle cx="8.4" cy="8.4" r="2.5" fill="#d6d6d6"/><circle cx="7.6" cy="7.6" r="0.9" fill="#fff"/><path d="M2.2 1.8 L13.6 14" stroke="#e01b24" stroke-width="1.2"/></g></svg>
<svg style="left:81.5px;top:280.8px" width="16" height="16" viewBox="0 0 16 16"><path d="M7.5 9 V0.8" stroke="#2f5f9e" stroke-width="1.7" stroke-linecap="round"/><path d="M7.5 9 H15.2" stroke="#73d216" stroke-width="1.6" stroke-linecap="round"/><path d="M7.5 9 L1.4 14.8" stroke="#7a0d0d" stroke-width="2.3" stroke-linecap="round"/><path d="M7.5 9 L1.4 14.8" stroke="#d41a1a" stroke-width="1.1" stroke-linecap="round"/><circle cx="7.5" cy="9" r="1.3" fill="#222"/></svg>
<div style="position:absolute;top:280.00px;line-height:20px;font-size:13.33px;letter-spacing:0.235px;color:#000;white-space:pre;left:103.10px;">Origin</div>
<svg style="left:48.0px;top:307.0px" width="8" height="5" viewBox="0 0 8 5"><path d="M0.2 0.4 H7.8 L4 4.8 Z" fill="#5a5a5a"/></svg>
<svg style="left:65.0px;top:301.3px" width="16" height="16" viewBox="0 0 16 16"><g transform="translate(8.2,8) scale(0.88) translate(-8,-8)"><path d="M1.2 8 C3.5 3.2 12.5 3.2 14.8 8 C12.5 12.8 3.5 12.8 1.2 8 Z" fill="#fff" stroke="#111" stroke-width="1.15"/><circle cx="8.6" cy="7.6" r="3" fill="#111"/><circle cx="7.4" cy="6.6" r="1" fill="#fff"/></g></svg>
<svg style="left:81.5px;top:300.8px" width="16" height="16" viewBox="0 0 16 16"><g transform="translate(7.6,8.6) scale(0.92) translate(-8,-8.6)"><path d="M1.5 5.5 L6.5 2 L10 3.5 V6.5 L14 8.2 V12.3 L8 15.5 L1.5 12.6 Z" fill="#3f74b8" stroke="#0b1521" stroke-width="0.8" stroke-linejoin="round"/><path d="M1.5 5.5 L6.5 2 L10 3.5 L5 7 Z M5 10 L10 6.5 L14 8.2 L8 11.4 Z" fill="#729fcf" stroke="#0b1521" stroke-width="0.5" stroke-linejoin="round"/><path d="M8 11.4 L14 8.2 V12.3 L8 15.5 Z M5 7 L10 3.5 V6.5 L5 10 Z" fill="#204a87" stroke="#0b1521" stroke-width="0.5" stroke-linejoin="round"/></g></svg>
<div style="position:absolute;top:300.00px;line-height:20px;font-size:13.33px;letter-spacing:-0.895px;color:#000;white-space:pre;left:103.10px;">DIEL_CAVITY</div>
<svg style="left:68.0px;top:327.0px" width="8" height="5" viewBox="0 0 8 5"><path d="M0.2 0.4 H7.8 L4 4.8 Z" fill="#5a5a5a"/></svg>
<svg style="left:85.0px;top:321.3px" width="16" height="16" viewBox="0 0 16 16"><g transform="translate(8.2,8) scale(0.9) translate(-8,-8)"><path d="M1.8 8.6 C4 4.6 12 4.6 14.2 8.6 C12 12.4 4 12.4 1.8 8.6 Z" fill="#fafafa" stroke="#bdbdbd" stroke-width="1.2"/><circle cx="8.4" cy="8.4" r="2.5" fill="#d6d6d6"/><circle cx="7.6" cy="7.6" r="0.9" fill="#fff"/><path d="M2.2 1.8 L13.6 14" stroke="#e01b24" stroke-width="1.2"/></g></svg>
<svg style="left:101.5px;top:320.8px" width="16" height="16" viewBox="0 0 16 16"><path d="M7.5 9 V0.8" stroke="#2f5f9e" stroke-width="1.7" stroke-linecap="round"/><path d="M7.5 9 H15.2" stroke="#73d216" stroke-width="1.6" stroke-linecap="round"/><path d="M7.5 9 L1.4 14.8" stroke="#7a0d0d" stroke-width="2.3" stroke-linecap="round"/><path d="M7.5 9 L1.4 14.8" stroke="#d41a1a" stroke-width="1.1" stroke-linecap="round"/><circle cx="7.5" cy="9" r="1.3" fill="#222"/></svg>
<div style="position:absolute;top:320.00px;line-height:20px;font-size:13.33px;letter-spacing:0.153px;color:#000;white-space:pre;left:123.10px;">Origin001</div>
<svg style="left:105.0px;top:341.3px" width="16" height="16" viewBox="0 0 16 16"><g transform="translate(8.2,8) scale(0.88) translate(-8,-8)"><path d="M1.2 8 C3.5 3.2 12.5 3.2 14.8 8 C12.5 12.8 3.5 12.8 1.2 8 Z" fill="#fff" stroke="#111" stroke-width="1.15"/><circle cx="8.6" cy="7.6" r="3" fill="#111"/><circle cx="7.4" cy="6.6" r="1" fill="#fff"/></g></svg>
<svg style="left:121.5px;top:340.8px" width="16" height="16" viewBox="0 0 16 16"><path d="M3.5 0.8 L12.5 5 V15.2 L3.5 11 Z" fill="#fbfbfb" stroke="#d0d0d0" stroke-width="0.8"/><path d="M4.5 5.2 L11.8 10.4" stroke="#b0202a" stroke-width="1.2"/></svg>
<div style="position:absolute;top:340.00px;line-height:20px;font-size:13.33px;letter-spacing:-0.629px;color:#000;white-space:pre;left:143.10px;">X_Axis</div>
<svg style="left:105.0px;top:361.3px" width="16" height="16" viewBox="0 0 16 16"><g transform="translate(8.2,8) scale(0.88) translate(-8,-8)"><path d="M1.2 8 C3.5 3.2 12.5 3.2 14.8 8 C12.5 12.8 3.5 12.8 1.2 8 Z" fill="#fff" stroke="#111" stroke-width="1.15"/><circle cx="8.6" cy="7.6" r="3" fill="#111"/><circle cx="7.4" cy="6.6" r="1" fill="#fff"/></g></svg>
<svg style="left:121.5px;top:360.8px" width="16" height="16" viewBox="0 0 16 16"><path d="M5 3 H14.5 L10.5 13 H1 Z" fill="#fbfbfb" stroke="#d0d0d0" stroke-width="0.8"/><path d="M10.2 3.6 L5.4 12.4" stroke="#2e8b2e" stroke-width="1.2"/></svg>
<div style="position:absolute;top:360.00px;line-height:20px;font-size:13.33px;letter-spacing:-0.666px;color:#000;white-space:pre;left:143.10px;">Y_Axis</div>
<svg style="left:105.0px;top:381.3px" width="16" height="16" viewBox="0 0 16 16"><g transform="translate(8.2,8) scale(0.88) translate(-8,-8)"><path d="M1.2 8 C3.5 3.2 12.5 3.2 14.8 8 C12.5 12.8 3.5 12.8 1.2 8 Z" fill="#fff" stroke="#111" stroke-width="1.15"/><circle cx="8.6" cy="7.6" r="3" fill="#111"/><circle cx="7.4" cy="6.6" r="1" fill="#fff"/></g></svg>
<svg style="left:121.5px;top:380.8px" width="16" height="16" viewBox="0 0 16 16"><path d="M4.5 4.5 L10.5 1 V12 L4.5 15 Z" fill="#fbfbfb" stroke="#d0d0d0" stroke-width="0.8"/><path d="M7.6 3.5 V12.8" stroke="#3a3aa8" stroke-width="1.2"/></svg>
<div style="position:absolute;top:380.00px;line-height:20px;font-size:13.33px;letter-spacing:-0.518px;color:#000;white-space:pre;left:143.10px;">Z_Axis</div>
<svg style="left:105.0px;top:401.3px" width="16" height="16" viewBox="0 0 16 16"><g transform="translate(8.2,8) scale(0.88) translate(-8,-8)"><path d="M1.2 8 C3.5 3.2 12.5 3.2 14.8 8 C12.5 12.8 3.5 12.8 1.2 8 Z" fill="#fff" stroke="#111" stroke-width="1.15"/><circle cx="8.6" cy="7.6" r="3" fill="#111"/><circle cx="7.4" cy="6.6" r="1" fill="#fff"/></g></svg>
<svg style="left:121.5px;top:400.8px" width="16" height="16" viewBox="0 0 16 16"><path d="M5.2 3.2 H15 L10.8 12.8 H1 Z" fill="#fff5f5" stroke="#a51d2d" stroke-width="1.3" stroke-linejoin="round"/></svg>
<div style="position:absolute;top:400.00px;line-height:20px;font-size:13.33px;letter-spacing:-0.659px;color:#000;white-space:pre;left:143.10px;">XY_Plane</div>
<svg style="left:105.0px;top:421.3px" width="16" height="16" viewBox="0 0 16 16"><g transform="translate(8.2,8) scale(0.88) translate(-8,-8)"><path d="M1.2 8 C3.5 3.2 12.5 3.2 14.8 8 C12.5 12.8 3.5 12.8 1.2 8 Z" fill="#fff" stroke="#111" stroke-width="1.15"/><circle cx="8.6" cy="7.6" r="3" fill="#111"/><circle cx="7.4" cy="6.6" r="1" fill="#fff"/></g></svg>
<svg style="left:121.5px;top:420.8px" width="16" height="16" viewBox="0 0 16 16"><path d="M3.8 1.5 L12.2 5.8 V14.8 L3.8 10.5 Z" fill="#f5fff5" stroke="#2e8b2e" stroke-width="1.3" stroke-linejoin="round"/></svg>
<div style="position:absolute;top:420.00px;line-height:20px;font-size:13.33px;letter-spacing:-0.548px;color:#000;white-space:pre;left:143.10px;">XZ_Plane</div>
<svg style="left:105.0px;top:441.3px" width="16" height="16" viewBox="0 0 16 16"><g transform="translate(8.2,8) scale(0.88) translate(-8,-8)"><path d="M1.2 8 C3.5 3.2 12.5 3.2 14.8 8 C12.5 12.8 3.5 12.8 1.2 8 Z" fill="#fff" stroke="#111" stroke-width="1.15"/><circle cx="8.6" cy="7.6" r="3" fill="#111"/><circle cx="7.4" cy="6.6" r="1" fill="#fff"/></g></svg>
<svg style="left:121.5px;top:440.8px" width="16" height="16" viewBox="0 0 16 16"><path d="M4.2 5.5 L11.8 1.2 V10.8 L4.2 15 Z" fill="#f5f5ff" stroke="#2a2aa8" stroke-width="1.3" stroke-linejoin="round"/></svg>
<div style="position:absolute;top:440.00px;line-height:20px;font-size:13.33px;letter-spacing:-0.575px;color:#000;white-space:pre;left:143.10px;">YZ_Plane</div>
<svg style="left:68.0px;top:467.0px" width="8" height="5" viewBox="0 0 8 5"><path d="M0.2 0.4 H7.8 L4 4.8 Z" fill="#5a5a5a"/></svg>
<svg style="left:85.0px;top:461.3px" width="16" height="16" viewBox="0 0 16 16"><g transform="translate(8.2,8) scale(0.88) translate(-8,-8)"><path d="M1.2 8 C3.5 3.2 12.5 3.2 14.8 8 C12.5 12.8 3.5 12.8 1.2 8 Z" fill="#fff" stroke="#111" stroke-width="1.15"/><circle cx="8.6" cy="7.6" r="3" fill="#111"/><circle cx="7.4" cy="6.6" r="1" fill="#fff"/></g></svg>
<svg style="left:101.5px;top:460.8px" width="16" height="16" viewBox="0 0 16 16"><path d="M0.5 13.5 L15.5 0.8" stroke="#e01b24" stroke-width="1"/><path d="M2.5 5.5 C5 1.5 10 0.8 13.5 3.5 L15.2 10.5 C13 12.5 9.5 14 6.5 13.2 C6.8 10 5.5 7 2.5 5.5 Z" fill="#edd400" stroke="#8a7400" stroke-width="0.7" stroke-linejoin="round"/><path d="M4 5 C7 4.2 9.5 6 10.5 9" fill="none" stroke="#fdf38c" stroke-width="1.6"/></svg>
<svg style="left:117.5px;top:460.8px" width="16" height="16" viewBox="0 0 16 16"><path d="M1 3 L5.5 0.8 L15 9.5 L10 15.2 L1.5 7.5 Z" fill="#e8e8e6" stroke="#8c8e89" stroke-width="1" stroke-linejoin="round"/><path d="M5.8 6.2 L9.2 4.6 L12.6 8.4 L9.4 11.2 Z" fill="#22d822" stroke="#0a7a0a" stroke-width="0.8"/><circle cx="3.6" cy="3.8" r="0.8" fill="#777"/></svg>
<div style="position:absolute;top:460.00px;line-height:20px;font-size:13.33px;letter-spacing:0.118px;color:#000;white-space:pre;left:139.10px;">Revolution</div>
<svg style="left:105.0px;top:481.3px" width="16" height="16" viewBox="0 0 16 16"><g transform="translate(8.2,8) scale(0.9) translate(-8,-8)"><path d="M1.8 8.6 C4 4.6 12 4.6 14.2 8.6 C12 12.4 4 12.4 1.8 8.6 Z" fill="#fafafa" stroke="#bdbdbd" stroke-width="1.2"/><circle cx="8.4" cy="8.4" r="2.5" fill="#d6d6d6"/><circle cx="7.6" cy="7.6" r="0.9" fill="#fff"/><path d="M2.2 1.8 L13.6 14" stroke="#e01b24" stroke-width="1.2"/></g></svg>
<svg style="left:121.5px;top:480.8px" width="16" height="16" viewBox="0 0 16 16"><rect x="1.5" y="6.5" width="8.8" height="8.6" fill="#fff" stroke="#cc1620" stroke-width="1.5"/><circle cx="10.2" cy="5.4" r="4.5" fill="none" stroke="#cc1620" stroke-width="1.5"/></svg>
<div style="position:absolute;top:480.00px;line-height:20px;font-size:13.33px;letter-spacing:-0.193px;color:#000;white-space:pre;left:143.10px;">Sketch</div>
<svg style="left:48.0px;top:507.0px" width="8" height="5" viewBox="0 0 8 5"><path d="M0.2 0.4 H7.8 L4 4.8 Z" fill="#5a5a5a"/></svg>
<svg style="left:65.0px;top:501.3px" width="16" height="16" viewBox="0 0 16 16"><g transform="translate(8.2,8) scale(0.9) translate(-8,-8)"><path d="M1.8 8.6 C4 4.6 12 4.6 14.2 8.6 C12 12.4 4 12.4 1.8 8.6 Z" fill="#fafafa" stroke="#bdbdbd" stroke-width="1.2"/><circle cx="8.4" cy="8.4" r="2.5" fill="#d6d6d6"/><circle cx="7.6" cy="7.6" r="0.9" fill="#fff"/><path d="M2.2 1.8 L13.6 14" stroke="#e01b24" stroke-width="1.2"/></g></svg>
<svg style="left:81.5px;top:500.8px" width="16" height="16" viewBox="0 0 16 16"><g transform="translate(7.6,8.6) scale(0.92) translate(-8,-8.6)"><path d="M1.5 5.5 L6.5 2 L10 3.5 V6.5 L14 8.2 V12.3 L8 15.5 L1.5 12.6 Z" fill="#3f74b8" stroke="#0b1521" stroke-width="0.8" stroke-linejoin="round"/><path d="M1.5 5.5 L6.5 2 L10 3.5 L5 7 Z M5 10 L10 6.5 L14 8.2 L8 11.4 Z" fill="#729fcf" stroke="#0b1521" stroke-width="0.5" stroke-linejoin="round"/><path d="M8 11.4 L14 8.2 V12.3 L8 15.5 Z M5 7 L10 3.5 V6.5 L5 10 Z" fill="#204a87" stroke="#0b1521" stroke-width="0.5" stroke-linejoin="round"/></g></svg>
<div style="position:absolute;top:500.00px;line-height:20px;font-size:13.33px;letter-spacing:-0.874px;color:#000;white-space:pre;left:103.10px;">WGP_1</div>
<svg style="left:69.5px;top:525.5px" width="5" height="8" viewBox="0 0 5 8"><path d="M0.4 0.2 V7.8 L4.8 4 Z" fill="#5a5a5a"/></svg>
<svg style="left:85.0px;top:521.3px" width="16" height="16" viewBox="0 0 16 16"><g transform="translate(8.2,8) scale(0.9) translate(-8,-8)"><path d="M1.8 8.6 C4 4.6 12 4.6 14.2 8.6 C12 12.4 4 12.4 1.8 8.6 Z" fill="#fafafa" stroke="#bdbdbd" stroke-width="1.2"/><circle cx="8.4" cy="8.4" r="2.5" fill="#d6d6d6"/><circle cx="7.6" cy="7.6" r="0.9" fill="#fff"/><path d="M2.2 1.8 L13.6 14" stroke="#e01b24" stroke-width="1.2"/></g></svg>
<svg style="left:101.5px;top:520.8px" width="16" height="16" viewBox="0 0 16 16"><path d="M7.5 9 V0.8" stroke="#2f5f9e" stroke-width="1.7" stroke-linecap="round"/><path d="M7.5 9 H15.2" stroke="#73d216" stroke-width="1.6" stroke-linecap="round"/><path d="M7.5 9 L1.4 14.8" stroke="#7a0d0d" stroke-width="2.3" stroke-linecap="round"/><path d="M7.5 9 L1.4 14.8" stroke="#d41a1a" stroke-width="1.1" stroke-linecap="round"/><circle cx="7.5" cy="9" r="1.3" fill="#222"/></svg>
<div style="position:absolute;top:520.00px;line-height:20px;font-size:13.33px;letter-spacing:0.153px;color:#000;white-space:pre;left:123.10px;">Origin003</div>
<svg style="left:85.0px;top:541.3px" width="16" height="16" viewBox="0 0 16 16"><g transform="translate(8.2,8) scale(0.88) translate(-8,-8)"><path d="M1.2 8 C3.5 3.2 12.5 3.2 14.8 8 C12.5 12.8 3.5 12.8 1.2 8 Z" fill="#fff" stroke="#111" stroke-width="1.15"/><circle cx="8.6" cy="7.6" r="3" fill="#111"/><circle cx="7.4" cy="6.6" r="1" fill="#fff"/></g></svg>
<svg style="left:101.5px;top:540.8px" width="16" height="16" viewBox="0 0 16 16"><path d="M2 1.6 C5 2.6 8.5 0.4 12.5 1.6 L13 5.8 C10.2 7.6 10.8 10.6 13.8 12.6 L14.6 15 L3.6 15.6 C5.2 12 1.6 10.4 1.8 6.8 Z" fill="#5fd02a" stroke="#2f7a10" stroke-width="0.8" stroke-linejoin="round"/><circle cx="1.9" cy="6.8" r="1.3" fill="#e01010"/><circle cx="13.4" cy="13.8" r="1.3" fill="#e01010"/><circle cx="12.4" cy="2.4" r="1.2" fill="#e01010"/><circle cx="12" cy="3.6" r="3.8" fill="#1a1aff"/><path d="M9.9 3.8 L11.5 5.6 L14.3 1.8" fill="none" stroke="#fff" stroke-width="1.3"/></svg>
<svg style="left:117.5px;top:540.8px" width="16" height="16" viewBox="0 0 16 16"><rect x="1.2" y="0.5" width="13.8" height="14.2" fill="#f7f7f7" stroke="#6f6f6f" stroke-width="0.8"/><path d="M2 13 L14.2 2" stroke="#e01b24" stroke-width="0.8"/><path d="M3.8 6.2 C5.8 3 9.5 2.5 12.2 4.2 L13.6 9.8 C12 11.3 9.2 12.5 6.8 12 C7 9.6 6 7.4 3.8 6.2 Z" fill="#edd400" stroke="#8a7400" stroke-width="0.6"/></svg>
<svg style="left:133.5px;top:540.8px" width="16" height="16" viewBox="0 0 16 16"><rect x="2.2" y="0.5" width="12.2" height="14.2" fill="#ebebeb" stroke="#d2d2d2" stroke-width="0.8"/><path d="M1 9 L7 4.6 V7.2 H13 V10.8 H7 V13.4 Z" fill="#cc0000" stroke="#8a0000" stroke-width="0.6" stroke-linejoin="round"/></svg>
<div style="position:absolute;top:540.00px;line-height:20px;font-size:13.33px;letter-spacing:0.085px;color:#000;white-space:pre;left:155.10px;">Binder(Revolution)</div>
<svg style="left:49.5px;top:565.5px" width="5" height="8" viewBox="0 0 5 8"><path d="M0.4 0.2 V7.8 L4.8 4 Z" fill="#5a5a5a"/></svg>
<svg style="left:65.0px;top:561.3px" width="16" height="16" viewBox="0 0 16 16"><g transform="translate(8.2,8) scale(0.9) translate(-8,-8)"><path d="M1.8 8.6 C4 4.6 12 4.6 14.2 8.6 C12 12.4 4 12.4 1.8 8.6 Z" fill="#fafafa" stroke="#bdbdbd" stroke-width="1.2"/><circle cx="8.4" cy="8.4" r="2.5" fill="#d6d6d6"/><circle cx="7.6" cy="7.6" r="0.9" fill="#fff"/><path d="M2.2 1.8 L13.6 14" stroke="#e01b24" stroke-width="1.2"/></g></svg>
<svg style="left:81.5px;top:560.8px" width="16" height="16" viewBox="0 0 16 16"><g transform="translate(7.6,8.6) scale(0.92) translate(-8,-8.6)"><path d="M1.5 5.5 L6.5 2 L10 3.5 V6.5 L14 8.2 V12.3 L8 15.5 L1.5 12.6 Z" fill="#3f74b8" stroke="#0b1521" stroke-width="0.8" stroke-linejoin="round"/><path d="M1.5 5.5 L6.5 2 L10 3.5 L5 7 Z M5 10 L10 6.5 L14 8.2 L8 11.4 Z" fill="#729fcf" stroke="#0b1521" stroke-width="0.5" stroke-linejoin="round"/><path d="M8 11.4 L14 8.2 V12.3 L8 15.5 Z M5 7 L10 3.5 V6.5 L5 10 Z" fill="#204a87" stroke="#0b1521" stroke-width="0.5" stroke-linejoin="round"/></g></svg>
<div style="position:absolute;top:560.00px;line-height:20px;font-size:13.33px;letter-spacing:-0.874px;color:#000;white-space:pre;left:103.10px;">WGP_2</div>
<svg style="left:48.0px;top:587.0px" width="8" height="5" viewBox="0 0 8 5"><path d="M0.2 0.4 H7.8 L4 4.8 Z" fill="#5a5a5a"/></svg>
<svg style="left:65.0px;top:581.3px" width="16" height="16" viewBox="0 0 16 16"><g transform="translate(8.2,8) scale(0.9) translate(-8,-8)"><path d="M1.8 8.6 C4 4.6 12 4.6 14.2 8.6 C12 12.4 4 12.4 1.8 8.6 Z" fill="#fafafa" stroke="#bdbdbd" stroke-width="1.2"/><circle cx="8.4" cy="8.4" r="2.5" fill="#d6d6d6"/><circle cx="7.6" cy="7.6" r="0.9" fill="#fff"/><path d="M2.2 1.8 L13.6 14" stroke="#e01b24" stroke-width="1.2"/></g></svg>
<svg style="left:81.5px;top:580.8px" width="16" height="16" viewBox="0 0 16 16"><g transform="translate(7.6,8.6) scale(0.92) translate(-8,-8.6)"><path d="M1.5 5.5 L6.5 2 L10 3.5 V6.5 L14 8.2 V12.3 L8 15.5 L1.5 12.6 Z" fill="#3f74b8" stroke="#0b1521" stroke-width="0.8" stroke-linejoin="round"/><path d="M1.5 5.5 L6.5 2 L10 3.5 L5 7 Z M5 10 L10 6.5 L14 8.2 L8 11.4 Z" fill="#729fcf" stroke="#0b1521" stroke-width="0.5" stroke-linejoin="round"/><path d="M8 11.4 L14 8.2 V12.3 L8 15.5 Z M5 7 L10 3.5 V6.5 L5 10 Z" fill="#204a87" stroke="#0b1521" stroke-width="0.5" stroke-linejoin="round"/></g></svg>
<div style="position:absolute;top:580.00px;line-height:20px;font-size:13.33px;letter-spacing:-0.894px;color:#000;white-space:pre;left:103.10px;">SPLIT_1</div>
<svg style="left:69.5px;top:605.5px" width="5" height="8" viewBox="0 0 5 8"><path d="M0.4 0.2 V7.8 L4.8 4 Z" fill="#5a5a5a"/></svg>
<svg style="left:85.0px;top:601.3px" width="16" height="16" viewBox="0 0 16 16"><g transform="translate(8.2,8) scale(0.9) translate(-8,-8)"><path d="M1.8 8.6 C4 4.6 12 4.6 14.2 8.6 C12 12.4 4 12.4 1.8 8.6 Z" fill="#fafafa" stroke="#bdbdbd" stroke-width="1.2"/><circle cx="8.4" cy="8.4" r="2.5" fill="#d6d6d6"/><circle cx="7.6" cy="7.6" r="0.9" fill="#fff"/><path d="M2.2 1.8 L13.6 14" stroke="#e01b24" stroke-width="1.2"/></g></svg>
<svg style="left:101.5px;top:600.8px" width="16" height="16" viewBox="0 0 16 16"><path d="M7.5 9 V0.8" stroke="#2f5f9e" stroke-width="1.7" stroke-linecap="round"/><path d="M7.5 9 H15.2" stroke="#73d216" stroke-width="1.6" stroke-linecap="round"/><path d="M7.5 9 L1.4 14.8" stroke="#7a0d0d" stroke-width="2.3" stroke-linecap="round"/><path d="M7.5 9 L1.4 14.8" stroke="#d41a1a" stroke-width="1.1" stroke-linecap="round"/><circle cx="7.5" cy="9" r="1.3" fill="#222"/></svg>
<div style="position:absolute;top:600.00px;line-height:20px;font-size:13.33px;letter-spacing:0.153px;color:#000;white-space:pre;left:123.10px;">Origin005</div>
<svg style="left:85.0px;top:621.3px" width="16" height="16" viewBox="0 0 16 16"><g transform="translate(8.2,8) scale(0.88) translate(-8,-8)"><path d="M1.2 8 C3.5 3.2 12.5 3.2 14.8 8 C12.5 12.8 3.5 12.8 1.2 8 Z" fill="#fff" stroke="#111" stroke-width="1.15"/><circle cx="8.6" cy="7.6" r="3" fill="#111"/><circle cx="7.4" cy="6.6" r="1" fill="#fff"/></g></svg>
<svg style="left:101.5px;top:620.8px" width="16" height="16" viewBox="0 0 16 16"><rect x="1.5" y="6.5" width="8.8" height="8.6" fill="#fff" stroke="#cc1620" stroke-width="1.5"/><circle cx="10.2" cy="5.4" r="4.5" fill="none" stroke="#cc1620" stroke-width="1.5"/></svg>
<div style="position:absolute;top:620.00px;line-height:20px;font-size:13.33px;letter-spacing:-0.131px;color:#000;white-space:pre;left:123.10px;">Sketch001</div>
<svg style="left:85.0px;top:641.3px" width="16" height="16" viewBox="0 0 16 16"><g transform="translate(8.2,8) scale(0.9) translate(-8,-8)"><path d="M1.8 8.6 C4 4.6 12 4.6 14.2 8.6 C12 12.4 4 12.4 1.8 8.6 Z" fill="#fafafa" stroke="#bdbdbd" stroke-width="1.2"/><circle cx="8.4" cy="8.4" r="2.5" fill="#d6d6d6"/><circle cx="7.6" cy="7.6" r="0.9" fill="#fff"/><path d="M2.2 1.8 L13.6 14" stroke="#e01b24" stroke-width="1.2"/></g></svg>
<svg style="left:101.5px;top:640.8px" width="16" height="16" viewBox="0 0 16 16"><path d="M2 1.6 C5 2.6 8.5 0.4 12.5 1.6 L13 5.8 C10.2 7.6 10.8 10.6 13.8 12.6 L14.6 15 L3.6 15.6 C5.2 12 1.6 10.4 1.8 6.8 Z" fill="#5fd02a" stroke="#2f7a10" stroke-width="0.8" stroke-linejoin="round"/><circle cx="1.9" cy="6.8" r="1.3" fill="#e01010"/><circle cx="13.4" cy="13.8" r="1.3" fill="#e01010"/><circle cx="12.4" cy="2.4" r="1.2" fill="#e01010"/></svg>
<svg style="left:117.5px;top:640.8px" width="16" height="16" viewBox="0 0 16 16"><rect x="1.2" y="0.5" width="13.8" height="14.2" fill="#f7f7f7" stroke="#6f6f6f" stroke-width="0.8"/><path d="M2 13 L14.2 2" stroke="#e01b24" stroke-width="0.8"/><path d="M3.8 6.2 C5.8 3 9.5 2.5 12.2 4.2 L13.6 9.8 C12 11.3 9.2 12.5 6.8 12 C7 9.6 6 7.4 3.8 6.2 Z" fill="#edd400" stroke="#8a7400" stroke-width="0.6"/></svg>
<div style="position:absolute;top:640.00px;line-height:20px;font-size:13.33px;letter-spacing:0.192px;color:#000;white-space:pre;left:139.10px;">Import(Revolution)</div>
<svg style="left:85.0px;top:661.3px" width="16" height="16" viewBox="0 0 16 16"><g transform="translate(8.2,8) scale(0.88) translate(-8,-8)"><path d="M1.2 8 C3.5 3.2 12.5 3.2 14.8 8 C12.5 12.8 3.5 12.8 1.2 8 Z" fill="#fff" stroke="#111" stroke-width="1.15"/><circle cx="8.6" cy="7.6" r="3" fill="#111"/><circle cx="7.4" cy="6.6" r="1" fill="#fff"/></g></svg>
<svg style="left:101.5px;top:660.8px" width="16" height="16" viewBox="0 0 16 16"><path d="M1 9.5 L6 8 H10.5 L15 9.5 V13 L8 15.6 L1 13.4 Z" fill="#3465a4" stroke="#0b1521" stroke-width="0.7" stroke-linejoin="round"/><path d="M1 9.5 L6 8 H10.5 L15 9.5 L8 11.6 Z" fill="#729fcf"/><path d="M8 0.4 L3.4 5.2 H6 V10 H10 V5.2 H12.6 Z" fill="#f3d91f" stroke="#8a7400" stroke-width="0.7" stroke-linejoin="round"/></svg>
<svg style="left:117.5px;top:660.8px" width="16" height="16" viewBox="0 0 16 16"><rect x="2.2" y="0.5" width="12.2" height="14.2" fill="#ebebeb" stroke="#d2d2d2" stroke-width="0.8"/><path d="M1 9 L7 4.6 V7.2 H13 V10.8 H7 V13.4 Z" fill="#cc0000" stroke="#8a0000" stroke-width="0.6" stroke-linejoin="round"/></svg>
<div style="position:absolute;top:660.00px;line-height:20px;font-size:13.33px;letter-spacing:0.161px;color:#000;white-space:pre;left:139.10px;">Extrusion</div>
<svg style="left:49.5px;top:685.5px" width="5" height="8" viewBox="0 0 5 8"><path d="M0.4 0.2 V7.8 L4.8 4 Z" fill="#5a5a5a"/></svg>
<svg style="left:65.0px;top:681.3px" width="16" height="16" viewBox="0 0 16 16"><g transform="translate(8.2,8) scale(0.9) translate(-8,-8)"><path d="M1.8 8.6 C4 4.6 12 4.6 14.2 8.6 C12 12.4 4 12.4 1.8 8.6 Z" fill="#fafafa" stroke="#bdbdbd" stroke-width="1.2"/><circle cx="8.4" cy="8.4" r="2.5" fill="#d6d6d6"/><circle cx="7.6" cy="7.6" r="0.9" fill="#fff"/><path d="M2.2 1.8 L13.6 14" stroke="#e01b24" stroke-width="1.2"/></g></svg>
<svg style="left:81.5px;top:680.8px" width="16" height="16" viewBox="0 0 16 16"><g transform="translate(7.6,8.6) scale(0.92) translate(-8,-8.6)"><path d="M1.5 5.5 L6.5 2 L10 3.5 V6.5 L14 8.2 V12.3 L8 15.5 L1.5 12.6 Z" fill="#3f74b8" stroke="#0b1521" stroke-width="0.8" stroke-linejoin="round"/><path d="M1.5 5.5 L6.5 2 L10 3.5 L5 7 Z M5 10 L10 6.5 L14 8.2 L8 11.4 Z" fill="#729fcf" stroke="#0b1521" stroke-width="0.5" stroke-linejoin="round"/><path d="M8 11.4 L14 8.2 V12.3 L8 15.5 Z M5 7 L10 3.5 V6.5 L5 10 Z" fill="#204a87" stroke="#0b1521" stroke-width="0.5" stroke-linejoin="round"/></g></svg>
<div style="position:absolute;top:680.00px;line-height:20px;font-size:13.33px;letter-spacing:-0.922px;color:#000;white-space:pre;left:103.10px;">BC_PMC</div>
<svg style="left:48.0px;top:707.0px" width="8" height="5" viewBox="0 0 8 5"><path d="M0.2 0.4 H7.8 L4 4.8 Z" fill="#5a5a5a"/></svg>
<svg style="left:65.0px;top:701.3px" width="16" height="16" viewBox="0 0 16 16"><g transform="translate(8.2,8) scale(0.9) translate(-8,-8)"><path d="M1.8 8.6 C4 4.6 12 4.6 14.2 8.6 C12 12.4 4 12.4 1.8 8.6 Z" fill="#fafafa" stroke="#bdbdbd" stroke-width="1.2"/><circle cx="8.4" cy="8.4" r="2.5" fill="#d6d6d6"/><circle cx="7.6" cy="7.6" r="0.9" fill="#fff"/><path d="M2.2 1.8 L13.6 14" stroke="#e01b24" stroke-width="1.2"/></g></svg>
<svg style="left:81.5px;top:700.8px" width="16" height="16" viewBox="0 0 16 16"><g transform="translate(7.6,8.6) scale(0.92) translate(-8,-8.6)"><path d="M1.5 5.5 L6.5 2 L10 3.5 V6.5 L14 8.2 V12.3 L8 15.5 L1.5 12.6 Z" fill="#3f74b8" stroke="#0b1521" stroke-width="0.8" stroke-linejoin="round"/><path d="M1.5 5.5 L6.5 2 L10 3.5 L5 7 Z M5 10 L10 6.5 L14 8.2 L8 11.4 Z" fill="#729fcf" stroke="#0b1521" stroke-width="0.5" stroke-linejoin="round"/><path d="M8 11.4 L14 8.2 V12.3 L8 15.5 Z M5 7 L10 3.5 V6.5 L5 10 Z" fill="#204a87" stroke="#0b1521" stroke-width="0.5" stroke-linejoin="round"/></g><circle cx="12" cy="3.6" r="3.8" fill="#1a1aff"/><path d="M9.9 3.8 L11.5 5.6 L14.3 1.8" fill="none" stroke="#fff" stroke-width="1.3"/></svg>
<div style="position:absolute;top:700.00px;line-height:20px;font-size:13.33px;letter-spacing:-1.301px;color:#000;white-space:pre;left:103.10px;">BC_PEC</div>
<svg style="left:69.5px;top:725.5px" width="5" height="8" viewBox="0 0 5 8"><path d="M0.4 0.2 V7.8 L4.8 4 Z" fill="#5a5a5a"/></svg>
<svg style="left:85.0px;top:721.3px" width="16" height="16" viewBox="0 0 16 16"><g transform="translate(8.2,8) scale(0.9) translate(-8,-8)"><path d="M1.8 8.6 C4 4.6 12 4.6 14.2 8.6 C12 12.4 4 12.4 1.8 8.6 Z" fill="#fafafa" stroke="#bdbdbd" stroke-width="1.2"/><circle cx="8.4" cy="8.4" r="2.5" fill="#d6d6d6"/><circle cx="7.6" cy="7.6" r="0.9" fill="#fff"/><path d="M2.2 1.8 L13.6 14" stroke="#e01b24" stroke-width="1.2"/></g></svg>
<svg style="left:101.5px;top:720.8px" width="16" height="16" viewBox="0 0 16 16"><path d="M7.5 9 V0.8" stroke="#2f5f9e" stroke-width="1.7" stroke-linecap="round"/><path d="M7.5 9 H15.2" stroke="#73d216" stroke-width="1.6" stroke-linecap="round"/><path d="M7.5 9 L1.4 14.8" stroke="#7a0d0d" stroke-width="2.3" stroke-linecap="round"/><path d="M7.5 9 L1.4 14.8" stroke="#d41a1a" stroke-width="1.1" stroke-linecap="round"/><circle cx="7.5" cy="9" r="1.3" fill="#222"/></svg>
<div style="position:absolute;top:720.00px;line-height:20px;font-size:13.33px;letter-spacing:0.153px;color:#000;white-space:pre;left:123.10px;">Origin007</div>
<svg style="left:85.0px;top:741.3px" width="16" height="16" viewBox="0 0 16 16"><g transform="translate(8.2,8) scale(0.88) translate(-8,-8)"><path d="M1.2 8 C3.5 3.2 12.5 3.2 14.8 8 C12.5 12.8 3.5 12.8 1.2 8 Z" fill="#fff" stroke="#111" stroke-width="1.15"/><circle cx="8.6" cy="7.6" r="3" fill="#111"/><circle cx="7.4" cy="6.6" r="1" fill="#fff"/></g></svg>
<svg style="left:101.5px;top:740.8px" width="16" height="16" viewBox="0 0 16 16"><path d="M2 1.6 C5 2.6 8.5 0.4 12.5 1.6 L13 5.8 C10.2 7.6 10.8 10.6 13.8 12.6 L14.6 15 L3.6 15.6 C5.2 12 1.6 10.4 1.8 6.8 Z" fill="#5fd02a" stroke="#2f7a10" stroke-width="0.8" stroke-linejoin="round"/><circle cx="1.9" cy="6.8" r="1.3" fill="#e01010"/><circle cx="13.4" cy="13.8" r="1.3" fill="#e01010"/><circle cx="12.4" cy="2.4" r="1.2" fill="#e01010"/><circle cx="12" cy="3.6" r="3.8" fill="#1a1aff"/><path d="M9.9 3.8 L11.5 5.6 L14.3 1.8" fill="none" stroke="#fff" stroke-width="1.3"/></svg>
<svg style="left:117.5px;top:740.8px" width="16" height="16" viewBox="0 0 16 16"><rect x="1.2" y="0.5" width="13.8" height="14.2" fill="#f7f7f7" stroke="#6f6f6f" stroke-width="0.8"/><path d="M2 13 L14.2 2" stroke="#e01b24" stroke-width="0.8"/><path d="M3.8 6.2 C5.8 3 9.5 2.5 12.2 4.2 L13.6 9.8 C12 11.3 9.2 12.5 6.8 12 C7 9.6 6 7.4 3.8 6.2 Z" fill="#edd400" stroke="#8a7400" stroke-width="0.6"/></svg>
<svg style="left:133.5px;top:740.8px" width="16" height="16" viewBox="0 0 16 16"><rect x="2.2" y="0.5" width="12.2" height="14.2" fill="#ebebeb" stroke="#d2d2d2" stroke-width="0.8"/><path d="M1 9 L7 4.6 V7.2 H13 V10.8 H7 V13.4 Z" fill="#cc0000" stroke="#8a0000" stroke-width="0.6" stroke-linejoin="round"/></svg>
<div style="position:absolute;top:740.00px;line-height:20px;font-size:13.33px;letter-spacing:0.072px;color:#000;white-space:pre;left:155.10px;">Binder003(Revolution)</div>
<svg style="left:45.0px;top:761.3px" width="16" height="16" viewBox="0 0 16 16"><g transform="translate(8.2,8) scale(0.88) translate(-8,-8)"><path d="M1.2 8 C3.5 3.2 12.5 3.2 14.8 8 C12.5 12.8 3.5 12.8 1.2 8 Z" fill="#fff" stroke="#111" stroke-width="1.15"/><circle cx="8.6" cy="7.6" r="3" fill="#111"/><circle cx="7.4" cy="6.6" r="1" fill="#fff"/></g></svg>
<svg style="left:61.5px;top:760.8px" width="16" height="16" viewBox="0 0 16 16"><rect x="1" y="1.2" width="14" height="12.8" rx="0.8" fill="#f4f4f4" stroke="#555" stroke-width="0.9"/><path d="M1 4.5 H15 M1 7.7 H15 M1 10.9 H15" stroke="#333" stroke-width="1.1"/><path d="M5.2 1.2 V14" stroke="#333" stroke-width="1.1"/></svg>
<div style="position:absolute;top:760.00px;line-height:20px;font-size:13.33px;letter-spacing:0.094px;color:#000;white-space:pre;left:83.10px;">Parameters</div>
<svg style="left:45.0px;top:781.3px" width="16" height="16" viewBox="0 0 16 16"><g transform="translate(8.2,8) scale(0.88) translate(-8,-8)"><path d="M1.2 8 C3.5 3.2 12.5 3.2 14.8 8 C12.5 12.8 3.5 12.8 1.2 8 Z" fill="#fff" stroke="#111" stroke-width="1.15"/><circle cx="8.6" cy="7.6" r="3" fill="#111"/><circle cx="7.4" cy="6.6" r="1" fill="#fff"/></g></svg>
<svg style="left:61.5px;top:780.8px" width="16" height="16" viewBox="0 0 16 16"><rect x="1" y="1.2" width="14" height="12.8" rx="0.8" fill="#f4f4f4" stroke="#555" stroke-width="0.9"/><path d="M1 4.5 H15 M1 7.7 H15 M1 10.9 H15" stroke="#333" stroke-width="1.1"/><path d="M5.2 1.2 V14" stroke="#333" stroke-width="1.1"/></svg>
<div style="position:absolute;top:780.00px;line-height:20px;font-size:13.33px;letter-spacing:0.054px;color:#000;white-space:pre;left:83.10px;">Variables</div>
<div style="position:absolute;left:2px;top:828px;width:292px;height:15px;background:#e6e6e6;border-top:1px solid #c6c6c6;"></div>
<div style="position:absolute;left:15px;top:829px;width:209px;height:14px;background:linear-gradient(#fdfdfd,#ececec);border-left:1px solid #c0c0c0;border-right:1px solid #c0c0c0;"></div>
<div style="position:absolute;left:2px;top:829px;width:13px;height:14px;background:linear-gradient(#fdfdfd,#ececec);"></div>
<div style="position:absolute;left:281px;top:829px;width:13px;height:14px;background:linear-gradient(#fdfdfd,#ececec);border-left:1px solid #c0c0c0;"></div>
<svg style="left:5px;top:832px" width="6" height="8" viewBox="0 0 6 8"><path d="M5 0.3 V7.7 L0.6 4 Z" fill="#444"/></svg>
<svg style="left:285px;top:832px" width="6" height="8" viewBox="0 0 6 8"><path d="M1 0.3 V7.7 L5.4 4 Z" fill="#444"/></svg>
<div style="position:absolute;left:84px;top:845px;width:109.5px;height:24.5px;background:linear-gradient(#e2e2e2,#dadada);border:1px solid #c3c3c3;border-top:none;border-radius:0 0 3px 3px;"></div>
<div style="position:absolute;left:1.5px;top:844px;width:82.5px;height:27.5px;background:#f6f6f6;border:1px solid #b9b9b9;border-top:none;border-radius:0 0 3px 3px;"></div>
<div style="position:absolute;top:848.50px;line-height:20px;font-size:13.33px;letter-spacing:-0.111px;color:#000;white-space:pre;left:13.60px;">Tree view</div>
<div style="position:absolute;top:847.50px;line-height:20px;font-size:13.33px;letter-spacing:0.071px;color:#000;white-space:pre;left:95.60px;">Property View</div>
<svg style="left:297px;top:518px" width="4" height="18" viewBox="0 0 4 18"><rect x="1" y="1" width="1" height="1" fill="#bdbdbd"/><rect x="2" y="2" width="1" height="1" fill="#fff"/><rect x="1" y="4" width="1" height="1" fill="#bdbdbd"/><rect x="2" y="5" width="1" height="1" fill="#fff"/><rect x="1" y="7" width="1" height="1" fill="#bdbdbd"/><rect x="2" y="8" width="1" height="1" fill="#fff"/><rect x="1" y="10" width="1" height="1" fill="#bdbdbd"/><rect x="2" y="11" width="1" height="1" fill="#fff"/><rect x="1" y="13" width="1" height="1" fill="#bdbdbd"/><rect x="2" y="14" width="1" height="1" fill="#fff"/><rect x="1" y="16" width="1" height="1" fill="#bdbdbd"/><rect x="2" y="17" width="1" height="1" fill="#fff"/></svg>
<div style="position:absolute;left:301px;top:178px;width:1464px;height:663px;background:linear-gradient(#aaffff,#9899ae);"></div>
<svg style="left:301px;top:178px" width="1464" height="663" viewBox="301 178 1464 663">
<defs><linearGradient id="cr1" gradientUnits="userSpaceOnUse" x1="819" y1="0" x2="869" y2="0"><stop offset="0" stop-color="#052a3e"/><stop offset="0.12" stop-color="#0a4e74"/><stop offset="1" stop-color="#0c7cb8"/></linearGradient><linearGradient id="cr2" gradientUnits="userSpaceOnUse" x1="1019" y1="0" x2="1070" y2="0"><stop offset="0" stop-color="#052a3e"/><stop offset="0.12" stop-color="#0a4e74"/><stop offset="1" stop-color="#0c7cb8"/></linearGradient><linearGradient id="sh1" gradientUnits="userSpaceOnUse" x1="903" y1="668" x2="927" y2="636"><stop offset="0" stop-color="#031a27"/><stop offset="0.3" stop-color="#07466a"/><stop offset="0.7" stop-color="#0a6a9f"/><stop offset="1" stop-color="#0c79b4"/></linearGradient><linearGradient id="sh2" gradientUnits="userSpaceOnUse" x1="1103" y1="590" x2="1127" y2="558"><stop offset="0" stop-color="#031a27"/><stop offset="0.3" stop-color="#07466a"/><stop offset="0.7" stop-color="#0a6a9f"/><stop offset="1" stop-color="#0c79b4"/></linearGradient><linearGradient id="sh3" gradientUnits="userSpaceOnUse" x1="1003" y1="580" x2="1012" y2="566"><stop offset="0" stop-color="#031a27"/><stop offset="1" stop-color="#0a5a86"/></linearGradient><linearGradient id="sh4" gradientUnits="userSpaceOnUse" x1="1204" y1="507" x2="1212" y2="494"><stop offset="0" stop-color="#031a27"/><stop offset="1" stop-color="#0a5a86"/></linearGradient></defs>
<g shape-rendering="crispEdges">
<path d="M599.3 590.3L724.0 543.8L738.5 549.7L757.4 543.1L757.5 534.0C758.0 532.9 758.7 529.6 760.4 527.5C762.1 525.4 764.4 523.3 767.6 521.5C770.8 519.7 774.6 518.1 779.6 516.7C784.6 515.4 791.0 514.1 797.6 513.4C804.2 512.7 815.9 512.6 819.5 512.5L819.4 468.5C819.6 467.9 819.8 466.1 820.6 465.0C821.4 463.9 822.5 462.6 824.2 461.8C825.9 461.0 827.5 460.4 831.0 460.1C834.5 459.8 840.7 459.8 845.5 460.1C850.3 460.5 854.2 461.2 860.0 462.2C865.8 463.2 873.3 464.6 880.0 466.0C886.7 467.4 893.0 469.0 900.0 470.8C907.0 472.6 915.2 474.6 921.8 476.6C928.4 478.6 936.7 481.8 939.7 482.8L952.4 478.4L952.4 458.0C952.8 456.9 953.0 453.5 954.7 451.4C956.5 449.3 959.0 447.3 962.9 445.4C966.8 443.5 972.1 441.4 977.9 440.1C983.6 438.8 990.5 438.1 997.4 437.6C1004.3 437.1 1015.5 437.3 1019.1 437.2L1019.1 393.2C1019.4 392.5 1019.6 390.4 1020.8 389.2C1022.0 388.0 1023.6 386.7 1026.5 385.9C1029.4 385.1 1034.1 384.7 1038.0 384.6C1041.9 384.5 1044.1 384.5 1049.8 385.2C1055.5 385.9 1063.9 387.1 1072.3 388.8C1080.7 390.5 1089.3 392.4 1100.0 395.4C1110.7 398.4 1130.2 405.0 1136.2 406.9L1151.2 401.6L1151.2 386.5C1151.6 385.4 1151.8 382.2 1153.4 379.9C1155.0 377.5 1157.7 374.5 1160.9 372.4C1164.2 370.3 1167.9 368.6 1172.9 367.2C1177.9 365.8 1184.7 364.8 1190.9 364.2C1197.1 363.6 1203.0 363.6 1210.0 363.5C1217.0 363.4 1229.0 363.4 1232.8 363.4L1232.8 350.7L1357.5 304.0L1439.2 338.4L681.1 625.0Z" fill="#0a4c6d"/>
<path d="M819.4 468.0C820.2 469.5 821.2 474.0 824.0 477.2C826.8 480.4 832.0 484.4 836.0 487.4C840.0 490.4 842.5 491.7 848.0 495.2C853.5 498.7 865.5 506.4 869.0 508.6L853.3 514.6L844.3 514.1L819.4 512.6Z" fill="url(#cr1)"/>
<path d="M1019.1 393.5C1021.0 395.9 1025.2 403.2 1030.3 407.9C1035.4 412.5 1043.2 417.1 1049.8 421.4C1056.4 425.7 1066.6 431.6 1070.0 433.7L1052.8 440.9L1040.0 439.3L1019.1 437.3Z" fill="url(#cr2)"/>
<path d="M952.4 462 L958.8 476 L952.4 478.4Z M1151.2 388 L1156.8 399.5 L1151.2 401.6Z M757.4 538 L760 542.2 L757.4 543.1Z" fill="#062f45"/>
<path d="M1232.8 350.7 L1247.8 357.4 L1232.8 363.5Z" fill="#0b87c8"/>
<path d="M918.5 600.3L899.6 607.6C899.0 608.8 897.9 611.2 896.1 614.5C894.4 617.8 891.9 622.7 889.1 627.1C886.3 631.5 880.9 638.5 879.3 640.8C881.4 643.2 887.5 650.9 891.9 655.1C896.3 659.4 901.2 663.1 905.9 666.3C910.6 669.4 915.2 671.5 919.9 674.0C924.6 676.5 931.6 679.8 934.0 681.0L940.0 682.4L925.0 640.0Z" fill="url(#sh1)"/>
<path d="M1117.8 522.0L1098.9 529.4C1098.4 530.5 1097.7 532.3 1096.1 535.7C1094.5 539.1 1091.9 544.8 1089.1 549.7C1086.3 554.6 1080.9 562.5 1079.3 565.1C1081.4 567.0 1087.5 572.6 1091.9 576.3C1096.3 580.0 1101.2 584.0 1105.9 587.5C1110.6 591.0 1115.2 594.2 1119.9 597.3C1124.6 600.4 1131.7 604.5 1134.0 606.0L1140.0 606.8L1125.0 565.0Z" fill="url(#sh2)"/>
<path d="M992.8 569.2 L1008 564 L1016 578 L1024 590 L1005.2 577.9Z" fill="url(#sh3)"/>
<path d="M1194 495.9 L1206 491 L1214 503 L1223 514 L1206.8 505.9Z" fill="url(#sh4)"/>
<path d="M810.5 651.7 L815.7 650 L824 659.8Z" fill="#052a3e"/>
<path d="M681.1 625.0L1439.2 338.4L1428.8 435.9L1304.0 482.4L1306.0 465.2L1286.0 473.4C1284.5 475.9 1279.7 484.3 1276.9 488.3C1274.1 492.3 1272.1 494.4 1269.1 497.4C1266.1 500.4 1262.2 503.9 1258.7 506.5C1255.2 509.1 1252.0 511.5 1248.3 513.0C1244.6 514.5 1240.1 515.3 1236.6 515.6C1233.1 515.9 1230.5 515.7 1227.5 514.9C1224.5 514.1 1221.4 513.0 1218.4 511.0C1215.4 508.9 1211.8 505.8 1209.4 502.6C1207.0 499.4 1205.1 493.7 1204.2 491.9L1194.4 495.8L1186.6 498.7C1186.2 499.8 1185.5 500.0 1184.2 505.0C1182.9 510.0 1180.5 521.2 1178.6 528.7C1176.7 536.2 1175.3 542.2 1173.0 549.7C1170.7 557.2 1167.4 566.5 1164.6 573.5C1161.8 580.5 1159.0 586.8 1156.2 591.7C1153.4 596.6 1150.6 600.4 1147.8 602.9C1145.0 605.4 1141.7 606.3 1139.4 606.8C1137.1 607.3 1134.7 605.9 1133.8 605.7C1133.1 604.8 1131.3 603.4 1129.7 600.1C1128.1 596.8 1125.6 591.5 1124.1 586.1C1122.6 580.7 1121.5 574.2 1120.6 567.9C1119.7 561.6 1119.0 555.9 1118.5 548.3C1118.0 540.6 1117.9 526.4 1117.8 522.0L1098.9 529.4C1098.4 530.5 1097.7 532.3 1096.1 535.7C1094.5 539.1 1091.9 544.8 1089.1 549.7C1086.3 554.6 1082.8 560.7 1079.3 565.1C1075.8 569.5 1071.8 572.8 1068.1 576.3C1064.4 579.8 1060.6 583.5 1056.9 586.1C1053.2 588.7 1049.2 590.5 1045.7 591.7C1042.2 592.9 1039.2 593.5 1035.9 593.4C1032.7 593.3 1029.0 592.2 1026.2 591.0C1023.4 589.8 1021.9 589.0 1019.2 586.1C1016.5 583.2 1012.1 577.0 1010.0 573.5C1007.9 570.0 1007.2 566.2 1006.6 564.8L993.3 569.3L987.0 571.9C986.8 572.7 986.5 572.9 985.6 576.8C984.7 580.6 983.0 588.5 981.4 595.0C979.8 601.5 977.9 608.2 975.8 615.9C973.7 623.6 971.1 633.9 968.8 641.1C966.5 648.3 964.1 654.4 961.8 659.3C959.5 664.2 957.1 667.2 954.8 670.5C952.5 673.8 950.4 676.9 947.8 678.9C945.2 680.9 941.7 682.1 939.4 682.4C937.1 682.7 934.7 680.9 933.8 680.6C933.3 680.1 932.4 679.9 931.0 677.5C929.6 675.1 927.1 671.9 925.5 666.3C923.9 660.7 922.3 651.1 921.3 643.9C920.2 636.7 919.7 630.2 919.2 622.9C918.7 615.6 918.6 604.1 918.5 600.3L899.6 607.6C899.0 608.8 897.9 611.2 896.1 614.5C894.4 617.8 891.9 622.7 889.1 627.1C886.3 631.5 882.6 636.8 879.3 640.8C876.0 644.8 872.8 648.0 869.5 650.9C866.2 653.8 863.0 655.9 859.7 657.9C856.4 659.9 853.2 661.7 849.9 662.8C846.6 663.9 843.1 664.5 840.1 664.6C837.1 664.7 834.5 664.4 831.7 663.5C828.9 662.6 826.1 661.5 823.4 659.3C820.7 657.1 817.0 651.7 815.7 650.2L810.8 651.6L796.1 657.2L794.7 676.1L670.1 722.2Z" fill="#09679a"/>
<path d="M1286 473.4 L1306.1 464.9 L1303.8 482.5Z" fill="#0b87c8"/>
<path d="M599.3 590.3L681.1 625.0L670.1 722.2C667.2 720.7 657.9 716.9 652.5 713.4C647.1 709.9 642.4 705.4 638.0 701.0C633.6 696.6 629.8 692.2 626.0 687.0C622.2 681.8 618.1 675.8 615.0 670.0C611.9 664.2 609.7 659.5 607.5 652.0C605.3 644.5 603.4 635.3 602.0 625.0C600.6 614.7 599.8 596.1 599.3 590.3Z" fill="#0b87c8"/>
</g>
<g stroke="#2a2a2a" stroke-width="1.25" stroke-linejoin="round"><polygon points="1654.1,311.5 1673.4,309.8 1704.1,315.9 1709.6,321.9 1713.5,331.3 1708.5,357.6 1704.1,365.3 1685.4,377.4 1671.2,379.1 1665.7,376.3 1645.3,362.0 1642.6,354.3 1642.6,326.3 1645.9,320.8" fill="#d4e7eb" stroke-width="1.8"/><polygon points="1654.5,311.7 1673.4,310.1 1703.9,316.1 1690.7,323.8 1676.1,323.0" fill="#d4e7eb"/><polygon points="1654.1,311.5 1676.1,323.0 1672.3,331.0 1648.6,322.5 1646.1,320.8" fill="#a9babf"/><polygon points="1690.7,323.8 1704.1,315.9 1709.6,321.9 1713.5,331.3 1712.9,329.9 1695.1,334.0" fill="#a9babf"/><polygon points="1642.8,326.6 1648.6,322.5 1672.3,331.0 1676.6,342.5 1673.4,372.5 1669.0,376.5 1665.7,376.1 1645.3,361.8 1642.6,354.3" fill="#d4e7eb"/><polygon points="1695.1,334.0 1713.2,330.4 1708.5,357.6 1704.1,365.3 1685.7,377.2 1685.1,372.8 1689.3,342.5" fill="#d4e7eb"/><polygon points="1676.1,323.0 1690.7,323.8 1695.1,334.0 1689.3,342.5 1676.6,342.5 1672.3,331.3" fill="#c6d9dd"/><polygon points="1676.6,342.5 1689.3,342.5 1685.1,372.8 1673.4,372.5" fill="#a9babf"/><polygon points="1669.0,376.5 1673.4,372.8 1685.1,372.8 1686.0,377.2 1671.2,379.1" fill="#c6d9dd"/></g><g font-family="'Liberation Sans',sans-serif" fill="#4a5257"><text x="0" y="0" font-size="7" font-weight="bold" transform="translate(1645.6,349.2) rotate(27) skewX(-14) scale(0.86,1.75)">BOTTOM</text><text x="0" y="0" font-size="6" font-weight="bold" transform="translate(1702.6,360.5) rotate(-76) scale(1.05,0.95)" fill="#7a858a">LEFT</text><text x="0" y="0" font-size="4" transform="translate(1672,314.2) rotate(12) scale(1.9,0.45)" fill="#9aa8ac">TOP</text></g><path d="M1677.7 396.1 L1645.3 372.5" stroke="#ff0000" stroke-width="1.3"/><path d="M1677.7 396.1 L1703.6 373.6" stroke="#0000ff" stroke-width="1.3"/><path d="M1677.7 396.1 L1684.3 348.8" stroke="#00ee00" stroke-width="1.3"/><g font-family="'Liberation Sans',sans-serif" font-size="9" fill="#000" text-anchor="middle"><text x="1642" y="368.5">X</text><text x="1715.2" y="373.6">Z</text><text x="1696.4" y="331.8">Y</text></g>
<g stroke-width="1.6" fill="none"><path d="M1732 807.6 L1718.4 801.4" stroke="#8e1b1b"/><path d="M1732 807.6 L1743.6 803.4" stroke="#1c1c9c"/><path d="M1732.3 807.6 L1734.4 785.3" stroke="#1d8a1d"/></g><path d="M1734.5 785 L1731 792.5 L1736.6 793Z" fill="#1d8a1d"/><path d="M1718 801.2 L1722.6 800.2 L1721 804.6Z" fill="#8e1b1b"/><path d="M1744 803.2 L1739.4 803 L1741 806.2Z" fill="#1c1c9c"/><g font-family="'Liberation Sans',sans-serif" font-size="8.5" font-weight="bold" fill="#000" text-anchor="middle"><text x="1738.4" y="783.4">Y</text><text x="1720.3" y="800.6">X</text><text x="1747.8" y="801.6">Z</text></g>
</svg>
<div style="position:absolute;left:301px;top:841px;width:1464px;height:1px;background:#f6f6f6"></div><div style="position:absolute;left:301px;top:842px;width:1464px;height:1px;background:#c0c0c0"></div>
<div style="position:absolute;left:301px;top:843px;width:133px;height:26.5px;background:linear-gradient(#e2e2e2,#dadada);border:1px solid #c3c3c3;border-top:none;border-radius:0 0 3px 3px;"></div>
<div style="position:absolute;left:433.5px;top:842px;width:129.5px;height:29.5px;background:#f6f6f6;border:1px solid #b9b9b9;border-top:none;border-radius:0 0 3px 3px;"></div>
<svg style="left:313px;top:847.5px" width="16" height="16" viewBox="0 0 16 16"><path d="M1 0.5 H8.5 V3.6 H4.4 V6.2 H7.2 V9 H4.4 V14.8 H1 Z" fill="#e51c20" stroke="#a01212" stroke-width="0.5"/><path d="M10.5 5.2 l0.7 1.5 1.6-0.6 0.3 1.7 1.7 0.2-0.6 1.6 1.4 0.9-1.3 1.1 0.8 1.5-1.7 0.3-0.1 1.7-1.6-0.5-0.9 1.4-1.1-1.3-1.5 0.8-0.3-1.7-1.7-0.2 0.6-1.6-1.4-0.9 1.3-1.1-0.8-1.5 1.7-0.3 0.1-1.7 1.6 0.5z" fill="#3f6fb5" stroke="#1f3f78" stroke-width="0.5"/><circle cx="10.4" cy="10.6" r="1.5" fill="#e8eef8"/></svg>
<div style="position:absolute;top:846.50px;line-height:20px;font-size:13.33px;letter-spacing:0.009px;color:#000;white-space:pre;left:333.60px;">Start page</div>
<svg style="left:405px;top:851.5px" width="10" height="10" viewBox="0 0 10 10"><path d="M1 1 L9 9" stroke="#111" stroke-width="1.7" stroke-linecap="round"/><path d="M8.6 0.8 C6 3.5 3.5 6 0.8 9" stroke="#111" stroke-width="1.3" stroke-linecap="round" fill="none"/></svg>
<svg style="left:445px;top:848.5px" width="16" height="16" viewBox="0 0 16 16"><path d="M1 0.5 H8.5 V3.6 H4.4 V6.2 H7.2 V9 H4.4 V14.8 H1 Z" fill="#e51c20" stroke="#a01212" stroke-width="0.5"/><path d="M10.5 5.2 l0.7 1.5 1.6-0.6 0.3 1.7 1.7 0.2-0.6 1.6 1.4 0.9-1.3 1.1 0.8 1.5-1.7 0.3-0.1 1.7-1.6-0.5-0.9 1.4-1.1-1.3-1.5 0.8-0.3-1.7-1.7-0.2 0.6-1.6-1.4-0.9 1.3-1.1-0.8-1.5 1.7-0.3 0.1-1.7 1.6 0.5z" fill="#3f6fb5" stroke="#1f3f78" stroke-width="0.5"/><circle cx="10.4" cy="10.6" r="1.5" fill="#e8eef8"/></svg>
<div style="position:absolute;top:847.50px;line-height:20px;font-size:13.33px;letter-spacing:0.062px;color:#000;white-space:pre;left:465.60px;">filterV7 : 1</div>
<svg style="left:535px;top:852.5px" width="10" height="10" viewBox="0 0 10 10"><path d="M1 1 L9 9" stroke="#111" stroke-width="1.7" stroke-linecap="round"/><path d="M8.6 0.8 C6 3.5 3.5 6 0.8 9" stroke="#111" stroke-width="1.3" stroke-linecap="round" fill="none"/></svg>
<svg style="left:1766px;top:518px" width="4" height="18" viewBox="0 0 4 18"><rect x="1" y="1" width="1" height="1" fill="#bdbdbd"/><rect x="2" y="2" width="1" height="1" fill="#fff"/><rect x="1" y="4" width="1" height="1" fill="#bdbdbd"/><rect x="2" y="5" width="1" height="1" fill="#fff"/><rect x="1" y="7" width="1" height="1" fill="#bdbdbd"/><rect x="2" y="8" width="1" height="1" fill="#fff"/><rect x="1" y="10" width="1" height="1" fill="#bdbdbd"/><rect x="2" y="11" width="1" height="1" fill="#fff"/><rect x="1" y="13" width="1" height="1" fill="#bdbdbd"/><rect x="2" y="14" width="1" height="1" fill="#fff"/><rect x="1" y="16" width="1" height="1" fill="#bdbdbd"/><rect x="2" y="17" width="1" height="1" fill="#fff"/></svg>
<div style="position:absolute;top:179.00px;line-height:20px;font-size:13.33px;letter-spacing:-0.226px;color:#000;white-space:pre;left:1786.60px;">Task View</div>
<svg style="left:1855px;top:180px" width="64" height="16" viewBox="0 0 64 16"><rect x="2.2" y="2.2" width="11.6" height="11.6" rx="1" fill="none" stroke="#808080" stroke-width="1.6"/><path d="M2.2 6 H13.8" stroke="#808080" stroke-width="1.6"/><rect x="26.2" y="6.2" width="8" height="8" rx="1" fill="none" stroke="#808080" stroke-width="1.6"/><path d="M30 6 V3.2 Q30 2.2 31 2.2 H37 Q38 2.2 38 3.2 V9.2 Q38 10.2 37 10.2 H34.4" fill="none" stroke="#808080" stroke-width="1.6"/><path d="M49.5 2.5 L60.5 13.5 M60.5 2.5 L49.5 13.5" stroke="#737373" stroke-width="2.4"/></svg>
<div style="position:absolute;left:1771px;top:198px;width:150px;height:674px;border:1px solid #b2b2b2;border-right-color:#bdbdbd;background:#efefef;box-shadow:inset 1px 1px 0 #fbfbfb;"></div>
<div style="position:absolute;left:1782px;top:209px;width:138px;height:638px;background:linear-gradient(#c9c9c9,#a0a0a0);"></div>
<div style="position:absolute;left:1782px;top:847px;width:138px;height:15px;background:linear-gradient(#f4f4f4,#ffffff 40%,#f6f6f6);border-bottom:1px solid #b9b9b9;border-left:1px solid #c4c4c4;"></div>
<div style="position:absolute;left:1796px;top:847px;width:1px;height:14px;background:#c4c4c4"></div>
<svg style="left:1786px;top:850px" width="6" height="8" viewBox="0 0 6 8"><path d="M5 0.3 V7.7 L0.6 4 Z" fill="#444"/></svg>
<svg style="left:957px;top:874px" width="12" height="3" viewBox="0 0 12 3"><rect x="0.5" y="1" width="1" height="1" fill="#c9c9c9"/><rect x="2.5" y="1" width="1" height="1" fill="#c9c9c9"/><rect x="4.5" y="1" width="1" height="1" fill="#c9c9c9"/><rect x="6.5" y="1" width="1" height="1" fill="#c9c9c9"/><rect x="8.5" y="1" width="1" height="1" fill="#c9c9c9"/><rect x="10.5" y="1" width="1" height="1" fill="#c9c9c9"/></svg>
<div style="position:absolute;top:879.70px;line-height:20px;font-size:13.33px;letter-spacing:0.065px;color:#000;white-space:pre;left:895.00px;">Report view</div>
<svg style="left:1855px;top:881px" width="64" height="16" viewBox="0 0 64 16"><rect x="2.2" y="2.2" width="11.6" height="11.6" rx="1" fill="none" stroke="#808080" stroke-width="1.6"/><path d="M2.2 6 H13.8" stroke="#808080" stroke-width="1.6"/><rect x="26.2" y="6.2" width="8" height="8" rx="1" fill="none" stroke="#808080" stroke-width="1.6"/><path d="M30 6 V3.2 Q30 2.2 31 2.2 H37 Q38 2.2 38 3.2 V9.2 Q38 10.2 37 10.2 H34.4" fill="none" stroke="#808080" stroke-width="1.6"/><path d="M49.5 2.5 L60.5 13.5 M60.5 2.5 L49.5 13.5" stroke="#737373" stroke-width="2.4"/></svg>
<div style="position:absolute;left:1px;top:899px;width:1920px;height:70px;border:1px solid #b5b5b5;background:#fff;"></div>
<div style="position:absolute;left:1593px;top:977px;width:16px;height:16px;border:1px solid #c9c9c9;border-radius:2px;background:#f4f4f4;"></div>
<svg style="left:1595px;top:979.5px" width="12" height="11" viewBox="0 0 12 11"><rect x="0" y="0" width="12" height="11" fill="#1f4f9a"/><path d="M0 0 H12 L6 4.5 Z" fill="#3b6fc0"/><path d="M0 11 L6 4.5 L12 11Z" fill="#173f82"/></svg>
<div style="position:absolute;top:975.50px;line-height:20px;font-size:13.33px;letter-spacing:-0.009px;color:#000;white-space:pre;left:1612.80px;">22</div>
<svg style="left:1660px;top:984px" width="7" height="4" viewBox="0 0 7 4"><path d="M0.2 0.2 H6.8 L3.5 3.8Z" fill="#555"/></svg>
<svg style="left:1692px;top:977px" width="12" height="17" viewBox="0 0 12 17"><rect x="2.2" y="1.6" width="7.6" height="13.6" rx="3.6" fill="#fff" stroke="#222" stroke-width="1.5"/><path d="M6 4 V7" stroke="#222" stroke-width="1.4" stroke-linecap="round"/></svg>
<div style="position:absolute;top:975.50px;line-height:20px;font-size:13.33px;letter-spacing:-0.780px;color:#000;white-space:pre;left:1709.60px;">CAD</div>
<svg style="left:1746.5px;top:984px" width="7" height="4" viewBox="0 0 7 4"><path d="M0.2 0.2 H6.8 L3.5 3.8Z" fill="#555"/></svg>
<div style="position:absolute;top:975.50px;line-height:20px;font-size:13.33px;letter-spacing:0.102px;color:#000;white-space:pre;left:1768.60px;">29.88 mm x 13.53 mm</div>
<svg style="left:1908.5px;top:984px" width="7" height="4" viewBox="0 0 7 4"><path d="M0.2 0.2 H6.8 L3.5 3.8Z" fill="#555"/></svg>
</body></html>
